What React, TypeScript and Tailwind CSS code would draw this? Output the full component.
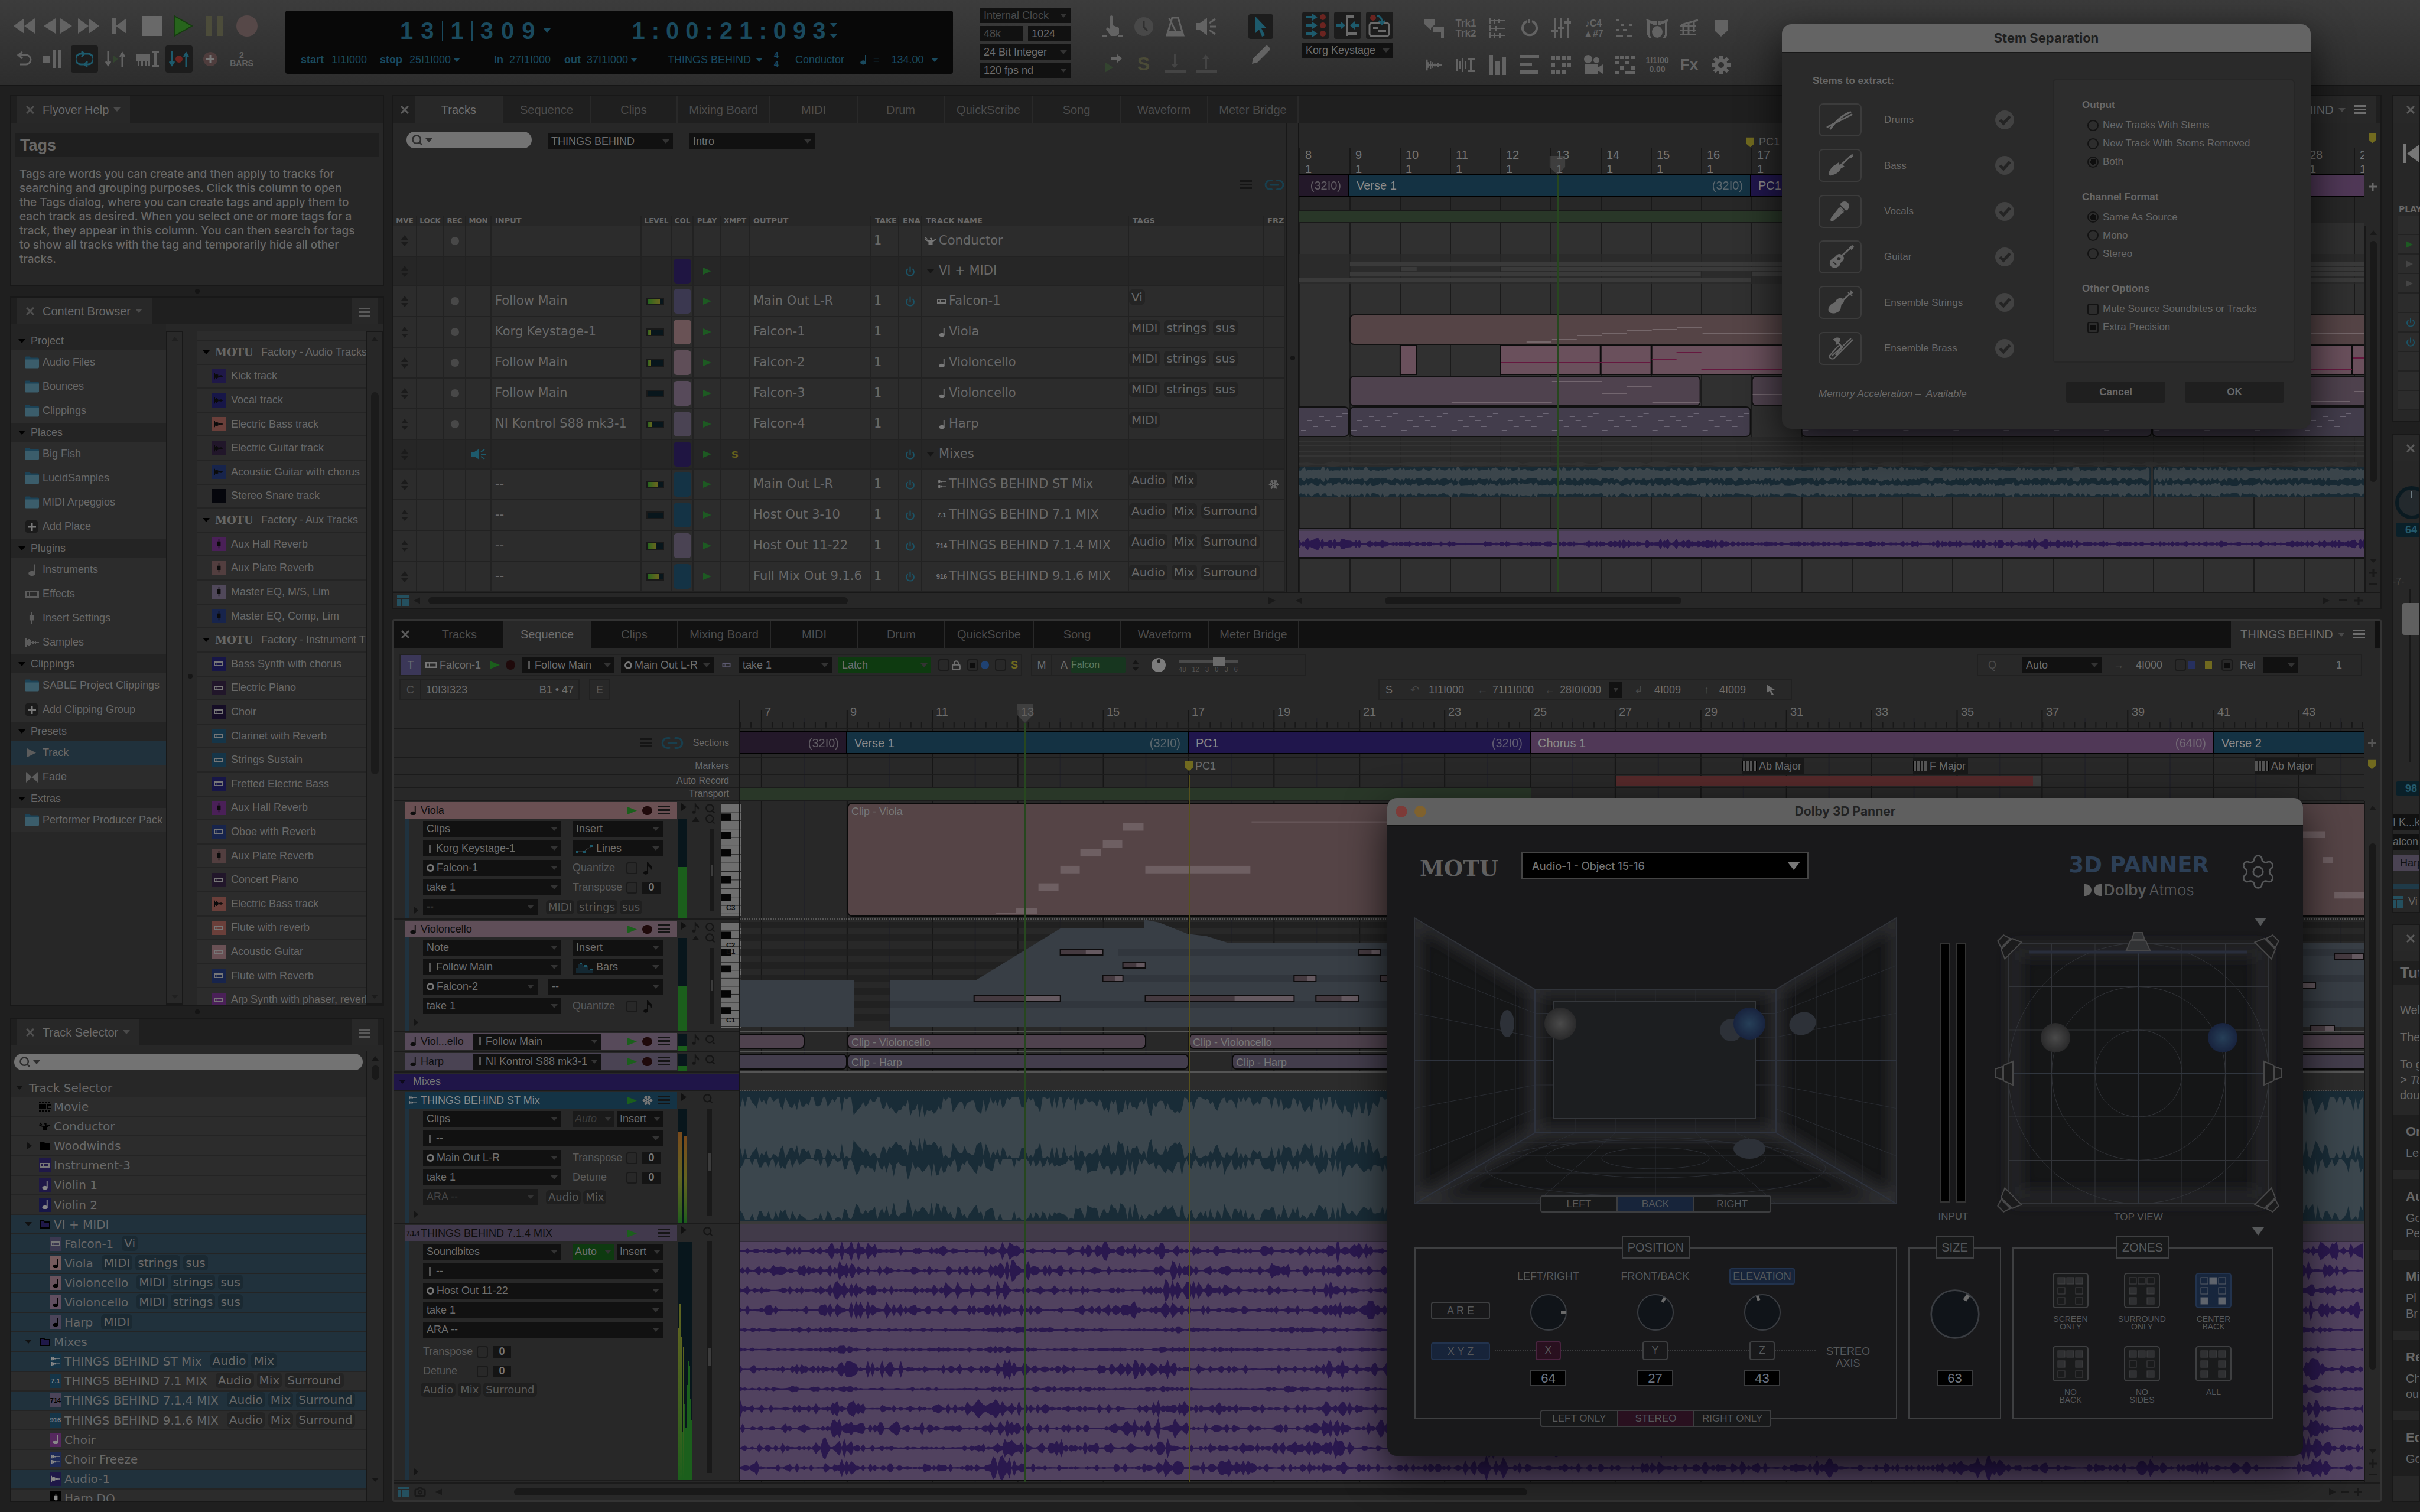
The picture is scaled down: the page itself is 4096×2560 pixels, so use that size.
import { ReactNode } from 'react';
import clsx, { ClassValue } from 'clsx';
import { twMerge } from 'tailwind-merge';
import { Link2, Lock, Power, Search, Snowflake, Camera, Settings } from 'lucide-react';

const VERDANA = "font-['DejaVu_Sans',Verdana,sans-serif]";

const cn = (...values: ClassValue[]) => twMerge(clsx(values));

/* ---------- small shapes ---------- */

function Down({ className }: { className?: string }) {
  return (
    <svg viewBox="0 0 12 7" preserveAspectRatio="none" className={cn('h-[7px] w-3 shrink-0 fill-current', className)}>
      <path d="M0 0h12L6 7z" />
    </svg>
  );
}

function Up({ className }: { className?: string }) {
  return (
    <svg viewBox="0 0 12 8" className={cn('h-2 w-3 shrink-0 fill-current', className)}>
      <path d="M0 8h12L6 0z" />
    </svg>
  );
}

function Play({ className }: { className?: string }) {
  return (
    <svg viewBox="0 0 12 12" preserveAspectRatio="none" className={cn('h-3 w-3 shrink-0 fill-current', className)}>
      <path d="M0 0v12l12-6z" />
    </svg>
  );
}

function Left({ className }: { className?: string }) {
  return (
    <svg viewBox="0 0 12 12" className={cn('h-3 w-[11px] shrink-0 fill-current', className)}>
      <path d="M12 0v12L0 6z" />
    </svg>
  );
}

function Bars({ className }: { className?: string }) {
  return (
    <svg viewBox="0 0 20 16" className={cn('h-4 w-5 shrink-0 fill-current', className)}>
      <path d="M0 0h20v3H0zM0 6h20v3H0zM0 12h20v3H0z" />
    </svg>
  );
}

function Cross({ className }: { className?: string }) {
  return (
    <svg viewBox="0 0 14 14" className={cn('h-[14px] w-[14px] shrink-0', className)}>
      <path d="M1 1l12 12M13 1L1 13" stroke="currentColor" strokeWidth="3" />
    </svg>
  );
}

function Plus({ className }: { className?: string }) {
  return (
    <svg viewBox="0 0 14 14" className={cn('h-[14px] w-[14px] shrink-0', className)}>
      <path d="M7 0v14M0 7h14" stroke="currentColor" strokeWidth="3" />
    </svg>
  );
}

function Note({ className }: { className?: string }) {
  return (
    <svg viewBox="0 0 10 16" className={cn('h-[15px] w-[10px] shrink-0 fill-current', className)}>
      <path d="M8 0h2v12a5 3.500 0 1 1-2-2z" />
    </svg>
  );
}

function Eighth({ className }: { className?: string }) {
  return (
    <svg viewBox="0 0 16 22" className={cn('h-[22px] w-4 shrink-0 fill-current', className)}>
      <path d="M6 0h2c0 5 7 5 7 11l-2 3c0-4-3-5-5-6v10a4 3 0 1 1-2-2z" />
    </svg>
  );
}

function WaveIcon({ className }: { className?: string }) {
  return (
    <svg viewBox="0 0 24 16" className={cn('h-3 w-4 shrink-0 fill-current', className)}>
      <path d="M0 0h3v16H0zM3 4h2v8H3zM6 2h2v12H6zM9 4h2v8H9zM12 6h3v4h-3zM3 7h21v2H3zM17 5h2v6h-2z" />
    </svg>
  );
}

function StereoIcon({ className }: { className?: string }) {
  return (
    <svg viewBox="0 0 16 18" className={cn('h-[16px] w-[14px] shrink-0 fill-current', className)}>
      <path d="M0 0h2v7H0zM3 1h2v5H3zM6 2h2v3H6zM2 3h14v1H2zM0 10h2v7H0zM3 11h2v5H3zM6 12h2v3H6zM2 13h14v1H2z" />
    </svg>
  );
}

function Rack({ className }: { className?: string }) {
  return (
    <svg viewBox="0 0 24 12" className={cn('h-[10px] w-5 shrink-0', className)}>
      <path fill="currentColor" fillRule="evenodd" d="M0 0h24v12H0zM3 3v6h4V3zM9 3v6h12V3z" />
    </svg>
  );
}

function Fader({ className }: { className?: string }) {
  return (
    <svg viewBox="0 0 10 22" className={cn('h-5 w-[9px] shrink-0 fill-current', className)}>
      <path d="M4 0h2v5h3v10H6v6H4v-6H1V5h3z" />
    </svg>
  );
}

function Folder({ className }: { className?: string }) {
  return (
    <svg viewBox="0 0 24 20" className={cn('h-[21px] w-6 shrink-0', className)}>
      <path d="M0 2q0-2 2-2h6l2 2h12q2 0 2 2v5H0z" fill="#1c4357" />
      <path d="M0 5h24v13q0 2-2 2H2q-2 0-2-2z" fill="#3b5d6b" />
    </svg>
  );
}

function Conductor({ className }: { className?: string }) {
  return (
    <svg viewBox="0 0 22 18" className={cn('h-4 w-5 shrink-0', className)}>
      <path
        d="M1 2l4 4M0 6l6 3M6 9h10l5-3M10 4h3v4M8 9h6v6H8z"
        stroke="currentColor"
        strokeWidth="2"
        fill="currentColor"
      />
    </svg>
  );
}

/* ---------- shared controls ---------- */

interface PickProps {
  label: string;
  value: string;
  prefix?: ReactNode;
  className?: string;
}

function Pick({ label, value, prefix, className }: PickProps) {
  return (
    <div className={cn('flex h-[27px] shrink-0 items-center gap-1 bg-[#111] px-[6px] text-[18px] text-[#6e6e6e]', className)}>
      {prefix}
      <select aria-label={label} className="h-full min-w-0 flex-1 appearance-none bg-transparent outline-none">
        <option>{value}</option>
      </select>
      <Down className="text-[#333]" />
    </div>
  );
}

const IN = <span className="mx-1 h-[14px] w-1 shrink-0 bg-[#555]" />;
const OUT = <span className="h-[13px] w-[13px] shrink-0 rounded-full border-[3px] border-[#777]" />;

function Tag({ text, dark }: { text: string; dark?: string }) {
  return <span className={cn('rounded-md bg-[#242424] px-1 leading-[26px]', dark)}>{text}</span>;
}

function PanelTab({ title, menu }: { title: string; menu?: boolean }) {
  return (
    <header className="flex h-[45px] shrink-0 justify-between bg-[#1f1f1f] px-[9px]">
      <div className="flex items-center bg-[#282828] px-[16px] text-[20px] text-[#6a6a6a]">
        <button aria-label={`Close ${title}`} className="mr-[14px] text-[#505050]">
          <Cross />
        </button>
        {title}
        <Down className="ml-2 text-[#4a4a4a]" />
      </div>
      {menu && (
        <button aria-label={`${title} menu`} className="flex w-[44px] items-center justify-center bg-[#282828] pt-1 text-[#5a5a5a]">
          <Bars />
        </button>
      )}
    </header>
  );
}

function SearchBox({ label, className }: { label: string; className?: string }) {
  return (
    <div className={cn('flex h-[28px] items-center gap-1 rounded-full bg-[#737373] px-[8px] text-[#2e2e2e]', className)}>
      <Search size={20} strokeWidth={3} />
      <Down />
      <input aria-label={label} className="min-w-0 flex-1 bg-transparent outline-none" />
    </div>
  );
}

/* ---------- wave drawing ---------- */

function randomizer(seed: number) {
  let s = seed;
  return () => {
    s = (s * 16807) % 2147483647;
    return s / 2147483647;
  };
}

function wavePath(width: number, mid: number, seed: number, step: number, amp: (x: number, r: number) => number) {
  const next = randomizer(seed * 7919 + 17);
  const top: string[] = [];
  const bottom: string[] = [];
  for (let x = 0; x <= width; x += step) {
    const a = amp(x, next());
    top.push(`${x} ${(mid - a).toFixed(1)}`);
    bottom.push(`${x} ${(mid + a).toFixed(1)}`);
  }
  return `M${top.join('L')}L${bottom.reverse().join('L')}Z`;
}

/* ---------- top bar ---------- */

function Cell({ label, children, className }: { label: string; children: ReactNode; className?: string }) {
  return (
    <button aria-label={label} className={cn('flex shrink-0 items-center justify-center text-[#636363]', className)}>
      {children}
    </button>
  );
}

function Art({ d, w = 30, h = 30, line }: { d: string; w?: number; h?: number; line?: boolean }) {
  return (
    <svg
      viewBox={`0 0 ${w} ${h}`}
      width={w}
      height={h}
      fill={line ? 'none' : 'currentColor'}
      stroke={line ? 'currentColor' : 'none'}
      strokeWidth={3}
    >
      <path d={d} />
    </svg>
  );
}

function Counter({ text, className }: { text: string; className?: string }) {
  return (
    <div className={cn('flex items-center gap-[13px] text-[40px] leading-[40px] font-bold', className)}>
      {text.split('').map((c, i) =>
        c === '|' ? <span key={i} className="h-[34px] w-[2px] bg-[#1a4a5e]" /> : <span key={i}>{c}</span>
      )}
    </div>
  );
}

function TopBar() {
  return (
    <header className="flex h-[144px] shrink-0 bg-linear-to-b from-[#3c3c3c] to-[#2d2d2d] pl-[22px]">
      <div className="w-[461px] shrink-0">
        <div className="flex h-[48px] items-center pt-[40px]">
          <Cell label="Rewind" className="w-[38px]"><Art w={36} h={26} d="M18 0v26L0 13zM36 0v26L18 13z" /></Cell>
          <Cell label="Step back" className="w-[34px] justify-end"><Art w={20} h={26} d="M20 0v26L0 13z" /></Cell>
          <Cell label="Step forward" className="w-[36px]"><Art w={20} h={26} d="M0 0v26l20-13z" /></Cell>
          <Cell label="Fast forward" className="w-[40px]"><Art w={36} h={26} d="M0 0v26l18-13zM18 0v26l18-13z" /></Cell>
          <Cell label="Return to start" className="w-[64px]"><Art w={24} h={26} d="M0 0h6v26H0zM24 0v26L6 13z" /></Cell>
          <Cell label="Stop" className="w-[46px]"><span className="h-[34px] w-[34px] bg-[#696969]" /></Cell>
          <Cell label="Play" className="w-[60px]">
            <svg width="34" height="38" viewBox="0 0 34 38"><path d="M2 2v34l30-17z" fill="#27641c" stroke="#163c10" strokeWidth="2" /></svg>
          </Cell>
          <Cell label="Pause" className="w-[46px] text-[#4c4c3a]"><Art w={28} h={34} d="M0 0h10v34H0zM18 0h10v34H18z" /></Cell>
          <Cell label="Record" className="w-[64px]"><span className="h-[36px] w-[36px] rounded-full bg-[#564848]" /></Cell>
        </div>
        <div className="flex h-[46px] items-center pt-[52px]">
          <Cell label="Undo" className="w-[36px]"><Art line w={28} h={26} d="M6 6h12a8 8 0 0 1 0 16H8M12 1L5 6l7 6" /></Cell>
          <Cell label="Memory" className="ml-[14px] w-[32px]"><Art w={30} h={30} d="M0 9h12v12H0zM17 0h4v30h-4zM25 0h5v30h-5z" /></Cell>
          <Cell label="Cycle" className="ml-[16px] h-[46px] w-[46px] rounded bg-[#1c1c1c] text-[#1d5a6c]">
            <Art line w={30} h={26} d="M14 22H9a9 9 0 0 1 0-18h4M10 0l5 4-5 5M16 4h5a9 9 0 0 1 0 18h-4M20 26l-5-4 5-5" />
          </Cell>
          <Cell label="Skip" className="ml-[12px] w-[34px]">
            <svg width="34" height="26" viewBox="0 0 34 26"><path d="M5 0v22M1 17l4 6 4-6M29 26V3M25 9l4-6 4 6" stroke="currentColor" strokeWidth="3" fill="none" /><path d="M13 6v14l9-7z" fill="#33442f" /></svg>
          </Cell>
          <Cell label="Link play" className="ml-[18px] w-[40px]"><Art w={40} h={26} d="M0 4h24v20h-3v-8h-3v8h-3v-8h-3v8H9v-8H6v8H3v-8H0zM27 0h12v3h-4v20h4v3H27v-3h4V3h-4z" /></Cell>
          <Cell label="Auto record" className="ml-[10px] h-[46px] w-[46px] rounded bg-[#1c1c1c] text-[#1d5a6c]">
            <svg width="34" height="26" viewBox="0 0 34 26"><path d="M5 0v22M1 17l4 6 4-6M29 26V3M25 9l4-6 4 6" stroke="currentColor" strokeWidth="3" fill="none" /><circle cx="17" cy="13" r="6" fill="#6b2420" /></svg>
          </Cell>
          <Cell label="Overdub" className="ml-[18px] h-[24px] w-[24px] rounded-full bg-[#4f3d3d] text-[#777]"><Plus /></Cell>
          <Cell label="Countoff" className="ml-[22px] w-[38px] flex-col text-[14px] leading-[14px] font-bold"><span>2</span><span>BARS</span></Cell>
        </div>
      </div>

      <div className="mt-[18px] flex h-[107px] w-[1130px] shrink-0 flex-col rounded bg-[#080808] text-[#1a4a5e]">
        <div className="flex h-[68px] items-center pl-[194px]">
          <Counter text="13|1|309" />
          <Down className="ml-[14px] h-2" />
          <div className="ml-[138px]"><Counter text="1:00:21:093" className="gap-[11px]" /></div>
          <div className="ml-2 flex flex-col gap-3"><Down /><Down /></div>
        </div>
        <div className="flex items-center pl-[26px] text-[18px] whitespace-nowrap">
          <span className="w-[52px] font-bold">start</span>
          <span className="w-[82px]">1I1I000</span>
          <span className="w-[50px] font-bold">stop</span>
          <span className="flex w-[143px] items-center gap-1">25I1I000 <Down /></span>
          <span className="w-[26px] font-bold">in</span>
          <span className="w-[93px]">27I1I000</span>
          <span className="w-[38px] font-bold">out</span>
          <span className="flex w-[137px] items-center gap-1">37I1I000 <Down /></span>
          <span className="flex w-[180px] items-center gap-2">THINGS BEHIND <Down /></span>
          <span className="flex w-[36px] flex-col text-[14px] leading-[15px] font-bold"><span>4</span><span>4</span></span>
          <span className="w-[110px]">Conductor</span>
          <Note className="mr-3 h-5" />
          <span className="flex items-center gap-3">= <span className="ml-2">134.00</span> <Down /></span>
        </div>
      </div>

      <div className="mt-[13px] ml-[46px] flex w-[153px] shrink-0 flex-col gap-[5px]">
        <Pick label="Clock source" value="Internal Clock" className="h-[26px] text-[#4a4a4a]" />
        <div className="flex gap-[9px] text-[18px] leading-[26px]">
          <span className="w-[72px] bg-[#111] pl-[6px] text-[#4a4a4a]">48k</span>
          <span className="w-[72px] bg-[#111] pl-[6px] text-[#6e6e6e]">1024</span>
        </div>
        <Pick label="Bit depth" value="24 Bit Integer" className="h-[26px]" />
        <Pick label="Frame rate" value="120 fps nd" className="h-[26px]" />
      </div>

      <div className="ml-[44px] grid shrink-0 auto-cols-[53px] grid-flow-col grid-rows-2 pt-[18px] [&>button]:h-[54px]">
        <Cell label="Tap tempo"><Art w={34} h={40} d="M12 4q3-6 6 0v14l10 4v10q-2 4-6 4h-8L6 24l3-3 3 3zM0 34h8v4H0zM26 34h8v4h-8z" /></Cell>
        <Cell label="Play through">
          <svg width="34" height="34"><path d="M14 5h10V0l9 8-9 8v-5H14z" fill="currentColor" /><path d="M4 14l14 9-14 9z" fill="#33442f" /></svg>
        </Cell>
        <Cell label="Clock" className="text-[#484848]"><svg width="34" height="34"><circle cx="17" cy="17" r="16" fill="currentColor" /><path d="M17 7v11l6 6" stroke="#303030" strokeWidth="3" fill="none" /></svg></Cell>
        <Cell label="Solo" className="text-[32px] font-bold text-[#4b4b37]">S</Cell>
        <Cell label="Metronome"><svg width="32" height="34"><path d="M11 2h10l9 30H2z" fill="none" stroke="currentColor" strokeWidth="3" /><path d="M4 24h24v8H3zM15 24L4 2h3l11 22z" fill="currentColor" /></svg></Cell>
        <Cell label="Import" className="text-[#444]"><Art w={36} h={32} d="M16 0h3v16h4l-6 7-6-7h5zM0 27h36v4H0z" /></Cell>
        <Cell label="Monitor"><svg width="36" height="32"><path d="M0 10h7L19 1v30L7 22H0z" fill="currentColor" /><path d="M23 10l10-7M24 16h11M23 22l10 7" stroke="currentColor" strokeWidth="3" /></svg></Cell>
        <Cell label="Export" className="text-[#444]"><Art w={36} h={32} d="M16 24h3V8h4l-6-8-6 8h5zM0 27h36v4H0z" /></Cell>
      </div>

      <div className="ml-[36px] flex w-[60px] shrink-0 flex-col items-center pt-[24px]">
        <Cell label="Pointer tool" className="h-[42px] w-[42px] rounded bg-[#1c1c1c] text-[#1d5a6c]"><Art w={24} h={34} d="M3 0l19 20h-9l6 12-5 2-5-12-6 6z" /></Cell>
        <Cell label="Pencil tool" className="mt-[10px]"><Art w={34} h={34} d="M2 32l2-9L25 2q2-2 4 0l3 3q2 2 0 4L11 30z" /></Cell>
      </div>

      <div className="ml-[40px] w-[154px] shrink-0 pt-[20px]">
        <div className="flex justify-between [&>button]:h-[46px] [&>button]:w-[46px] [&>button]:rounded [&>button]:bg-[#1c1c1c]">
          <Cell label="Record targets">
            <svg width="38" height="40">
              {[6, 20, 34].map((y) => (
                <g key={y}><path d={`M2 ${y - 2}h11v-4l9 6-9 6v-4H2z`} fill="#1d5a6c" /><circle cx="31" cy={y} r="5" fill="#6b2420" /></g>
              ))}
            </svg>
          </Cell>
          <Cell label="Split">
            <svg width="40" height="40"><path d="M18 2h3v36h-3zM21 3h10v5H21zM21 31h14v5H21z" fill="#6b6b6b" /><path d="M1 18h7v-5l8 7-8 7v-5H1zM39 18h-7v-5l-8 7 8 7v-5h7z" fill="#1d5a6c" /></svg>
          </Cell>
          <Cell label="Clip record">
            <svg width="40" height="40"><circle cx="9" cy="7" r="5" fill="#6b2420" /><rect x="3" y="16" width="33" height="22" rx="4" fill="none" stroke="#6b6b6b" strokeWidth="3" /><path d="M9 22h8v4H9zM17 27h14v4H17z" fill="#6b6b6b" /><path d="M16 4q8 0 8 12m-5-4l5 6 5-6" stroke="#1d5a6c" strokeWidth="3" fill="none" /></svg>
          </Cell>
        </div>
        <Pick label="Controller" value="Korg Keystage" className="mt-[6px] h-[26px]" />
      </div>

      <div className="ml-[42px] grid shrink-0 auto-cols-[54px] grid-flow-col grid-rows-2 pt-[21px] [&>button]:h-[54px]">
        <Cell label="Shields"><Art w={34} h={32} d="M0 0h18v10l-6 5v4L0 8zM16 14h18v18h-5V22H16z" /></Cell>
        <Cell label="Soundbites"><WaveIcon className="h-5 w-7" /></Cell>
        <Cell label="Track names" className="flex-col text-[17px] leading-[17px] font-bold"><span>Trk1</span><span>Trk2</span></Cell>
        <Cell label="Waveform editor"><Art w={34} h={28} d="M0 4h3v20H0zM5 8h3v12H5zM10 2h3v24h-3zM15 8h3v12h-3zM20 2h12v3h-4v18h4v3H20v-3h4V5h-4z" /></Cell>
        <Cell label="Waves"><Art w={30} h={36} d="M0 1h3v10H0zM3 4h24v2H3zM8 2h3v8H8zM15 2h3v7h-3zM0 13h3v10H0zM3 17h24v2H3zM10 14h3v8h-3zM0 25h3v10H0zM3 29h24v2H3zM8 26h3v8H8zM17 26h3v8h-3z" /></Cell>
        <Cell label="Levels"><Art w={30} h={34} d="M0 0h7v34H0zM11 10h7v24h-7zM22 4h7v30h-7z" /></Cell>
        <Cell label="Loop"><svg width="32" height="32"><path d="M12 4a12 12 0 1 0 8 0M15 1v6" fill="none" stroke="currentColor" strokeWidth="4" /></svg></Cell>
        <Cell label="Layers"><Art w={32} h={34} d="M0 0h32v6H0zM0 13h20v6H0zM0 26h30v6H0z" /></Cell>
        <Cell label="Mixer"><Art w={34} h={34} d="M4 0h3v34H4zM15 0h3v34h-3zM26 0h3v34h-3zM0 20h11v4H0zM11 14h11v4H11zM22 5h11v4H22z" /></Cell>
        <Cell label="Steps"><Art w={36} h={32} d="M0 0h7v7H0zM9 0h7v7H9zM18 0h7v7h-7zM27 0h7v7h-7zM0 12h7v7H0zM18 12h7v7h-7zM27 12h7v7h-7zM0 24h7v7H0zM9 24h7v7H9zM18 24h7v7h-7z" /></Cell>
        <Cell label="Chords" className="flex-col text-[16px] leading-[17px] font-bold"><span>♪C4</span><span>▲#7</span></Cell>
        <Cell label="Movie"><Art w={36} h={34} d="M2 7a7 7 0 1 1 14 0a7 7 0 1 1-14 0M18 9a5 5 0 1 1 10 0a5 5 0 1 1-10 0M4 16h22v5l8-5v16l-8-5v5H4z" /></Cell>
        <Cell label="Notes"><Art w={32} h={32} d="M0 0h6v4H0zM8 8h6v4H8zM22 8h6v4h-6zM0 17h6v4H0zM12 17h6v4h-6zM0 27h12v4H0zM18 27h10v4H18z" /></Cell>
        <Cell label="Grid"><Art w={36} h={32} d="M0 0h7v6H0zM9 0h7v6H9zM18 0h7v6h-7zM27 0h7v6h-7zM0 9h7v6H0zM18 9h7v6h-7zM9 18h7v6H9zM27 18h7v6h-7zM0 27h7v5H0zM18 27h16v5H18z" /></Cell>
        <Cell label="Drum kit"><Art w={38} h={36} d="M0 2l14 5-2 4L6 9v20l4 6H6l-4-6V8zM38 2L24 7l2 4 6-2v20l-4 6h4l4-6V8zM10 24a9 10 0 1 1 18 0a9 10 0 1 1-18 0M12 6h6v7h-6zM20 6h6v7h-6z" /></Cell>
        <Cell label="Time" className="flex-col text-[14px] leading-[15px] font-bold"><span>1I1I00</span><span>0.00</span></Cell>
        <Cell label="Notation"><svg width="36" height="32"><path d="M2 12h28M2 19h28M2 26h28" stroke="currentColor" strokeWidth="2" /><path d="M8 8v18M17 6v19M26 5v18M33 2L5 10" stroke="currentColor" strokeWidth="3" fill="none" /></svg></Cell>
        <Cell label="Effects" className="text-[26px] font-bold">Fx</Cell>
        <Cell label="Marker"><Art w={22} h={28} d="M0 0h22v18L11 28 0 18z" /></Cell>
        <Cell label="Settings">
          <svg width="34" height="34" viewBox="-17 -17 34 34">
            {[0, 45, 90, 135].map((a) => <rect key={a} x="-3" y="-16" width="6" height="32" fill="currentColor" transform={`rotate(${a})`} />)}
            <circle r="11" fill="currentColor" />
            <circle r="5" fill="#303030" />
          </svg>
        </Cell>
      </div>
    </header>
  );
}

/* ---------- left column ---------- */

const browser = [
  { title: 'Project', items: ['Audio Files', 'Bounces', 'Clippings'] },
  { title: 'Places', items: ['Big Fish', 'LucidSamples', 'MIDI Arpeggios', 'Add Place'] },
  { title: 'Plugins', items: ['Instruments', 'Effects', 'Insert Settings', 'Samples'] },
  { title: 'Clippings', items: ['SABLE Project Clippings', 'Add Clipping Group'] },
  { title: 'Presets', items: ['Track', 'Fade'] },
  { title: 'Extras', items: ['Performer Producer Pack'] },
];

function BrowserIcon({ name }: { name: string }) {
  if (name.startsWith('Add')) {
    return <span className="flex h-[21px] w-[21px] items-center justify-center rounded bg-[#1b1b1b] text-[#7a7a7a]"><Plus /></span>;
  }
  if (name === 'Instruments') return <Note className="h-5 w-3" />;
  if (name === 'Effects') return <Rack className="h-3 w-6" />;
  if (name === 'Insert Settings') return <Fader />;
  if (name === 'Samples') return <WaveIcon className="h-4 w-6" />;
  if (name === 'Track') return <Play className="h-[15px] w-[15px]" />;
  if (name === 'Fade') return <Art w={20} h={18} d="M0 0l10 9L0 18zM20 0L10 9l10 9z" />;
  return <Folder />;
}

const presets: [string, string, string][] = [
  ['head', 'Factory - Audio Tracks', ''],
  ['wave', 'Kick track', 'bg-[#1f1848]'],
  ['wave', 'Vocal track', 'bg-[#171648]'],
  ['wave', 'Electric Bass track', 'bg-[#6a3f3a]'],
  ['wave', 'Electric Guitar track', 'bg-[#21162a]'],
  ['wave', 'Acoustic Guitar with chorus', 'bg-[#17244c]'],
  ['none', 'Stereo Snare track', 'bg-[#05060c]'],
  ['head', 'Factory - Aux Tracks', ''],
  ['aux', 'Aux Hall Reverb', 'bg-[#4a2058]'],
  ['aux', 'Aux Plate Reverb', 'bg-[#523e3f]'],
  ['master', 'Master EQ, M/S, Lim', 'bg-[#50485a]'],
  ['master', 'Master EQ, Comp, Lim', 'bg-[#17244c]'],
  ['head', 'Factory - Instrument Tracks', ''],
  ['inst', 'Bass Synth with chorus', 'bg-[#171648]'],
  ['inst', 'Electric Piano', 'bg-[#21162a]'],
  ['inst', 'Choir', 'bg-[#150d26]'],
  ['inst', 'Clarinet with Reverb', 'bg-[#153548]'],
  ['inst', 'Strings Sustain', 'bg-[#153548]'],
  ['inst', 'Fretted Electric Bass', 'bg-[#171648]'],
  ['aux', 'Aux Hall Reverb', 'bg-[#4a2058]'],
  ['inst', 'Oboe with Reverb', 'bg-[#17244c]'],
  ['aux', 'Aux Plate Reverb', 'bg-[#523e3f]'],
  ['inst', 'Concert Piano', 'bg-[#21162a]'],
  ['wave', 'Electric Bass track', 'bg-[#6a3f3a]'],
  ['inst', 'Flute with reverb', 'bg-[#6a3f3a]'],
  ['inst', 'Acoustic Guitar', 'bg-[#695054]'],
  ['inst', 'Flute with Reverb', 'bg-[#17244c]'],
  ['inst', 'Arp Synth with phaser, reverb', 'bg-[#4a2058]'],
];

function PresetIcon({ kind }: { kind: string }) {
  if (kind === 'wave') return <WaveIcon className="text-[#0b0b0b]" />;
  if (kind === 'aux' || kind === 'master') return <Fader className="h-4 text-[#0b0b0b]" />;
  if (kind === 'inst') return <Rack className="h-2 w-4 text-[#777]" />;
  return null;
}

interface TreeRow {
  name: string;
  icon: string;
  tile?: string;
  depth: number;
  on?: boolean;
  tags?: string[];
}

const tree: TreeRow[] = [
  { name: 'Movie', icon: 'movie', depth: 0 },
  { name: 'Conductor', icon: 'conductor', depth: 0 },
  { name: 'Woodwinds', icon: 'closed', depth: 0 },
  { name: 'Instrument-3', icon: 'rack', tile: 'bg-[#1f1848]', depth: 0 },
  { name: 'Violin 1', icon: 'note', tile: 'bg-[#1f1848] text-[#888]', depth: 0 },
  { name: 'Violin 2', icon: 'note', tile: 'bg-[#171648] text-[#888]', depth: 0 },
  { name: 'VI + MIDI', icon: 'open', depth: 0, on: true },
  { name: 'Falcon-1', icon: 'rack', tile: 'bg-[#3b3850]', depth: 1, on: true, tags: ['Vi'] },
  { name: 'Viola', icon: 'note', tile: 'bg-[#755a5c]', depth: 1, on: true, tags: ['MIDI', 'strings', 'sus'] },
  { name: 'Violoncello', icon: 'note', tile: 'bg-[#68525c]', depth: 1, on: true, tags: ['MIDI', 'strings', 'sus'] },
  { name: 'Violoncello', icon: 'note', tile: 'bg-[#604e60]', depth: 1, on: true, tags: ['MIDI', 'strings', 'sus'] },
  { name: 'Harp', icon: 'note', tile: 'bg-[#4b4459]', depth: 1, on: true, tags: ['MIDI'] },
  { name: 'Mixes', icon: 'open', depth: 0, on: true },
  { name: 'THINGS BEHIND ST Mix', icon: 'stereo', tile: 'bg-[#153548] text-[#888]', depth: 1, on: true, tags: ['Audio', 'Mix'] },
  { name: 'THINGS BEHIND 7.1 MIX', icon: '7.1', tile: 'bg-[#153548] text-[#888]', depth: 1, tags: ['Audio', 'Mix', 'Surround'] },
  { name: 'THINGS BEHIND 7.1.4 MIX', icon: '714', tile: 'bg-[#4b4459]', depth: 1, on: true, tags: ['Audio', 'Mix', 'Surround'] },
  { name: 'THINGS BEHIND 9.1.6 MIX', icon: '916', tile: 'bg-[#153548] text-[#888]', depth: 1, tags: ['Audio', 'Mix', 'Surround'] },
  { name: 'Choir', icon: 'note', tile: 'bg-[#55285e] text-[#888]', depth: 1 },
  { name: 'Choir Freeze', icon: 'stereo', tile: 'bg-[#1e2a55] text-[#888]', depth: 1 },
  { name: 'Audio-1', icon: 'wave', tile: 'bg-[#1f1848] text-[#888]', depth: 1, on: true },
  { name: 'Harp DQ', icon: 'fader', tile: 'bg-black text-[#888]', depth: 1 },
];

function TreeIcon({ icon }: { icon: string }) {
  if (icon === 'movie') return <Art w={20} h={16} d="M0 0h3v2H0zM5 0h3v2H5zM10 0h3v2h-3zM15 0h3v2h-3zM0 4h12v8H0zM14 4h6v2h-4v4h4v2h-6zM0 14h3v2H0zM5 14h3v2H5zM10 14h3v2h-3zM15 14h3v2h-3z" />;
  if (icon === 'conductor') return <Conductor />;
  if (icon === 'closed') return <Art w={18} h={14} d="M1 0h6l2 2h9v12H0V1z" />;
  if (icon === 'open') return <svg width="18" height="14"><path d="M1 1h6l2 2h8v10H1z" fill="#1f1848" stroke="#000" strokeWidth="2" /></svg>;
  if (icon === 'rack') return <Rack className="h-2 w-4 text-[#777]" />;
  if (icon === 'note') return <Note />;
  if (icon === 'stereo') return <StereoIcon />;
  if (icon === 'wave') return <WaveIcon />;
  if (icon === 'fader') return <Fader className="h-4" />;
  return <span className="font-['Liberation_Sans'] text-[11px] font-bold">{icon}</span>;
}

function LeftColumn() {
  return (
    <aside className="flex w-[633px] shrink-0 flex-col text-[#686868]">
      <section className="h-[323px] border-2 border-[#181818] bg-[#272727]">
        <PanelTab title="Flyover Help" />
        <h2 className="mx-[7px] mt-[18px] bg-[#1f1f1f] px-2 text-[27px] leading-[40px] font-bold">Tags</h2>
        <p className="mt-[17px] px-[14px] font-[Inter,sans-serif] text-[19px] leading-6 font-medium">
          Tags are words you can create and then apply to tracks for<br />
          searching and grouping purposes. Click this column to open<br />
          the Tags dialog, where you can create tags and apply them to<br />
          each track as desired. When you select one or more tags for a<br />
          track, they appear in this column. You can then search for tags<br />
          to show all tracks with the tag and temporarily hide all other<br />
          tracks.
        </p>
      </section>
      <div className="mx-auto my-[5px] h-2 w-2 rounded-full bg-[#141414]" />

      <section className="flex h-[1201px] flex-col overflow-hidden border-2 border-[#181818] bg-[#272727] text-[18px]">
        <PanelTab title="Content Browser" menu />
        <div className="flex min-h-0 flex-1">
          <nav className="w-[262px] shrink-0 overflow-hidden whitespace-nowrap">
            {browser.map((g, i) => (
              <div key={g.title}>
                <h3 className={cn('flex items-center bg-[#242424] pl-3', i === 0 ? 'h-[44px] pt-3' : 'h-[32px]')}>
                  <Down className="mr-[9px] text-black" />
                  {g.title}
                </h3>
                {g.items.map((name) => (
                  <a
                    key={name}
                    href="#browse"
                    className={cn('flex h-[41px] items-center pl-[22px]', name === 'Track' ? 'bg-[#20313c]' : 'bg-[#2c2c2c]')}
                  >
                    <span className="mr-[6px] flex w-[25px] shrink-0 justify-center text-[#5c5c5c]"><BrowserIcon name={name} /></span>
                    {name}
                  </a>
                ))}
              </div>
            ))}
          </nav>
          <div className="mt-[11px] flex w-[29px] shrink-0 flex-col items-center justify-between border-2 border-[#181818] bg-[#292929] py-2 text-[#202020]">
            <Up />
            <Down />
          </div>
          <div className="flex w-[24px] shrink-0 items-center justify-center pt-[40px]"><span className="h-2 w-2 rounded-full bg-[#161616]" /></div>
          <div className="mt-[11px] w-[286px] shrink-0 overflow-hidden">
            <div className="h-[15px] bg-[#2c2c2c]" />
            <ul className="flex h-[1137px] flex-col whitespace-nowrap">
              {presets.map(([kind, name, tile], i) => (
                <li key={i} className="flex flex-1 items-center border-t-2 border-[#242424] bg-[#2c2c2c]">
                  {kind === 'head' ? (
                    <>
                      <Down className="ml-[9px] text-black" />
                      <b className="ml-[9px] w-[78px] shrink-0 font-['DejaVu_Serif'] text-[18px]">MOTU</b>
                    </>
                  ) : (
                    <span className={cn('mr-[9px] ml-6 flex h-6 w-6 shrink-0 items-center justify-center', tile)}><PresetIcon kind={kind} /></span>
                  )}
                  {name}
                </li>
              ))}
            </ul>
          </div>
          <div className="mt-[11px] flex flex-1 flex-col items-center border-2 border-[#181818] py-2 text-[#1b1b1b]">
            <Up />
            <div className="mt-[86px] h-[647px] w-[13px] rounded-full bg-[#1b1b1b]" />
            <Down className="mt-auto" />
          </div>
        </div>
      </section>
      <div className="mx-auto my-[6px] h-2 w-2 rounded-full bg-[#141414]" />

      <section className={cn('flex min-h-0 flex-1 flex-col border-2 border-[#181818] bg-[#272727] text-[20px]', VERDANA)}>
        <div className="font-['Liberation_Sans']"><PanelTab title="Track Selector" menu /></div>
        <div className="flex min-h-0 flex-1">
          <div className="min-w-0 flex-1 overflow-hidden whitespace-nowrap">
            <SearchBox label="Search tracks" className="mt-[14px] mr-[6px] ml-[5px]" />
            <div className="mt-[13px] flex h-[33px] items-center pl-2"><Down className="mr-[10px] text-[#111]" />Track Selector</div>
            <ul className="flex h-[697px] flex-col">
              {tree.map((t, i) => (
                <li
                  key={i}
                  className={cn('flex flex-1 items-center border-b-2 border-[#242424]', t.on ? 'bg-[#20313c]' : 'bg-[#2c2c2c]')}
                >
                  <span className="flex w-[47px] shrink-0 justify-end pr-3 text-[#111]">
                    {t.icon === 'open' && <Down />}
                    {t.icon === 'closed' && <Play className="w-2" />}
                  </span>
                  {t.depth === 1 && <span className="w-[18px] shrink-0" />}
                  <span className={cn('mr-[5px] flex h-6 w-5 shrink-0 items-center justify-center text-black', t.tile)}><TreeIcon icon={t.icon} /></span>
                  {t.name}
                  <span className="ml-[14px] flex gap-[5px] pb-[2px]">
                    {t.tags?.map((tag) => <Tag key={tag} text={tag} dark={t.on ? 'bg-[#1a2932]' : undefined} />)}
                  </span>
                </li>
              ))}
            </ul>
          </div>
          <div className="mt-[10px] flex w-[28px] shrink-0 flex-col items-center border-l-2 border-[#181818] py-2 text-[#151515]">
            <Up />
            <div className="mt-2 h-6 w-[13px] rounded-full bg-[#191919]" />
            <Down className="mt-auto mb-[24px]" />
          </div>
        </div>
      </section>
    </aside>
  );
}

/* ---------- window tabs ---------- */

const tabs: [string, string][] = [
  ['Tracks', 'w-[149px]'],
  ['Sequence', 'w-[148px]'],
  ['Clips', 'w-[147px]'],
  ['Mixing Board', 'w-[157px]'],
  ['MIDI', 'w-[148px]'],
  ['Drum', 'w-[147px]'],
  ['QuickScribe', 'w-[150px]'],
  ['Song', 'w-[148px]'],
  ['Waveform', 'w-[148px]'],
  ['Meter Bridge', 'w-[153px]'],
];

function WindowTabs({ active, bar }: { active: string; bar: string }) {
  return (
    <div className={cn('flex h-[46px] shrink-0 items-stretch text-[20px] text-[#4c4c4c]', bar)}>
      <button aria-label="Close" className="flex w-[37px] items-center justify-center text-[#5c5c5c]"><Cross /></button>
      {tabs.map(([name, width]) => (
        <button
          key={name}
          className={cn(width, 'border-r-2 border-[#292929]', name === active && 'bg-[#282828] text-[#6e6e6e]')}
        >
          {name}
        </button>
      ))}
      <div className="mr-2 ml-auto flex w-[244px] items-center gap-2 bg-[#282828] pl-[16px] text-[#6e6e6e]">
        THINGS BEHIND
        <Down className="text-[#4a4a4a]" />
        <Bars className="ml-[6px]" />
      </div>
    </div>
  );
}

function VerticalBar({ thumb }: { thumb: string }) {
  return (
    <div className="flex w-[27px] flex-1 flex-col items-center gap-[10px] border-l-2 border-[#181818] pt-2 pb-3 text-[#191919]">
      <Up />
      <div className={cn('w-[12px] rounded-full bg-[#191919]', thumb)} />
      <Down className="mt-auto" />
      <Plus />
      <span className="h-[3px] w-[14px] bg-[#191919]" />
    </div>
  );
}

/* ---------- upper window: tracks ---------- */

const columns: [string, string][] = [
  ['MVE', 'w-[39px]'], ['LOCK', 'w-[46px]'], ['REC', 'w-[37px]'], ['MON', 'w-[43px]'], ['INPUT', 'w-[254px]'],
  ['LEVEL', 'w-[52px]'], ['COL', 'w-[36px]'], ['PLAY', 'w-[47px]'], ['XMPT', 'w-[48px]'], ['OUTPUT', 'w-[206px]'],
  ['TAKE', 'w-[47px]'], ['ENA', 'w-[39px]'], ['TRACK NAME', 'w-[350px]'], ['TAGS', 'w-[228px]'], ['FRZ', 'w-[36px]'],
];

interface Track {
  name: string;
  kind: string;
  input?: string;
  output?: string;
  color?: string;
  level?: string;
  rec?: boolean;
  ena?: boolean;
  tags?: string[];
}

const tracks: Track[] = [
  { name: 'Conductor', kind: 'conductor', rec: true },
  { name: 'VI + MIDI', kind: 'folder', color: 'bg-[#1f1542]', ena: true },
  { name: 'Falcon-1', kind: 'rack', input: 'Follow Main', output: 'Main Out L-R', color: 'bg-[#3b3850]', level: 'w-[21px]', rec: true, ena: true, tags: ['Vi'] },
  { name: 'Viola', kind: 'note', input: 'Korg Keystage-1', output: 'Falcon-1', color: 'bg-[#695255]', level: 'w-[6px]', rec: true, tags: ['MIDI', 'strings', 'sus'] },
  { name: 'Violoncello', kind: 'note', input: 'Follow Main', output: 'Falcon-2', color: 'bg-[#5f4e58]', level: 'w-[6px]', rec: true, tags: ['MIDI', 'strings', 'sus'] },
  { name: 'Violoncello', kind: 'note', input: 'Follow Main', output: 'Falcon-3', color: 'bg-[#574a5a]', level: 'w-0', rec: true, tags: ['MIDI', 'strings', 'sus'] },
  { name: 'Harp', kind: 'note', input: 'NI Kontrol S88 mk3-1', output: 'Falcon-4', color: 'bg-[#4a4353]', level: 'w-[8px]', rec: true, tags: ['MIDI'] },
  { name: 'Mixes', kind: 'folder', color: 'bg-[#1f1542]', ena: true },
  { name: 'THINGS BEHIND ST Mix', kind: 'stereo', input: '--', output: 'Main Out L-R', color: 'bg-[#143345]', level: 'w-[17px]', ena: true, tags: ['Audio', 'Mix'] },
  { name: 'THINGS BEHIND 7.1 MIX', kind: '7.1', input: '--', output: 'Host Out 3-10', color: 'bg-[#143345]', level: 'w-0', ena: true, tags: ['Audio', 'Mix', 'Surround'] },
  { name: 'THINGS BEHIND 7.1.4 MIX', kind: '714', input: '--', output: 'Host Out 11-22', color: 'bg-[#4a4353]', level: 'w-[15px]', ena: true, tags: ['Audio', 'Mix', 'Surround'] },
  { name: 'THINGS BEHIND 9.1.6 MIX', kind: '916', input: '--', output: 'Full Mix Out 9.1.6', color: 'bg-[#143345]', level: 'w-[19px]', ena: true, tags: ['Audio', 'Mix', 'Surround'] },
];

function TrackTable() {
  return (
    <table className={cn('w-[1508px] table-fixed border-collapse text-left text-[21px] whitespace-nowrap', VERDANA)}>
      <thead>
        <tr className="h-[17px] text-[12px] leading-[16px] font-bold">
          {columns.map(([name, width], i) => (
            <th key={name} className={cn(width, 'border-r-2 border-[#222] p-0', i === 4 || i > 8 ? 'pl-[6px] text-[13px]' : 'text-center')}>
              {name}
            </th>
          ))}
        </tr>
      </thead>
      <tbody>
        {tracks.map((t, i) => {
          const folder = t.kind === 'folder';
          return (
            <tr
              key={i}
              className={cn(
                '[&>td]:border-r-2 [&>td]:border-b-2 [&>td]:border-[#222] [&>td]:p-0',
                folder ? 'h-[50px] bg-[#262626]' : 'h-[52px] bg-[#2c2c2c]'
              )}
            >
              <td><span className="flex flex-col items-center gap-1 text-[#1b1b1b]"><Up /><Down /></span></td>
              <td />
              <td>{t.rec && <span className="mx-auto block h-[14px] w-[14px] rounded-full bg-[#484848]" />}</td>
              <td>
                {t.name === 'Mixes' && (
                  <svg width="24" height="18" className="mx-auto text-[#1d5a6c]"><path d="M0 5h5l8-5v18l-8-5H0z" fill="currentColor" /><path d="M16 5l6-4M16 9h8M16 13l6 4" stroke="currentColor" strokeWidth="2" /></svg>
                )}
              </td>
              <td><span className="pl-[6px]">{t.input}</span></td>
              <td>
                {t.level && (
                  <span className="ml-[8px] block h-[13px] w-[30px] border-2 border-[#191919] bg-[#08161c]">
                    <span className={cn('block h-full bg-linear-to-r from-[#1d661e] to-[#6a661e]', t.level)} />
                  </span>
                )}
              </td>
              <td>{t.color && <span className={cn('mx-auto block h-[42px] w-[30px] rounded-md', t.color)} />}</td>
              <td>{t.color && <Play className="mx-auto w-[14px] text-[#1d5a22]" />}</td>
              <td className="text-center">{t.name === 'Mixes' && <b className="text-[20px] text-[#66611c]">s</b>}</td>
              <td><span className="pl-[6px]">{t.output}</span></td>
              <td><span className="pl-[4px]">{!folder && '1'}</span></td>
              <td>{t.ena && <Power size={17} strokeWidth={3} className="mx-auto text-[#1b5467]" />}</td>
              <td>
                <span className="flex items-center">
                  {folder || t.kind === 'conductor' ? (
                    <span className="flex w-[28px] justify-center text-[#777]">{folder ? <Down className="text-[#151515]" /> : <Conductor />}</span>
                  ) : (
                    <span className="ml-[21px] flex w-[24px] justify-center text-[#7a7a7a]"><TreeIcon icon={t.kind} /></span>
                  )}
                  {t.name}
                </span>
              </td>
              <td><span className="flex gap-[7px] pb-[14px] text-[20px]">{t.tags?.map((tag) => <Tag key={tag} text={tag} />)}</span></td>
              <td>{t.kind === 'stereo' && <Snowflake size={18} strokeWidth={3} className="mx-auto text-[#666]" />}</td>
            </tr>
          );
        })}
      </tbody>
    </table>
  );
}

interface SectionItem {
  name: string;
  width: number;
  length?: string;
  color: string;
}

function SectionBar({ items, height }: { items: SectionItem[]; height: string }) {
  return (
    <div className={cn('flex border-y-2 border-black bg-black text-[20px] text-[#8a8a8a]', height)}>
      {items.map((s, i) => (
        <div
          key={i}
          className={cn('flex shrink-0 items-center justify-between border-r-2 border-black px-[12px]', s.color)}
          style={{ width: s.width }}
        >
          <span>{s.name}</span>
          <span className="opacity-60">{s.length}</span>
        </div>
      ))}
    </div>
  );
}

function Playhead() {
  return (
    <svg viewBox="0 0 28 34" className="h-[32px] w-[28px] shrink-0">
      <path d="M0 0h28v20L14 34 0 20z" fill="#555" fillOpacity="0.5" />
    </svg>
  );
}

function Flag() {
  return (
    <svg viewBox="0 0 14 18" className="h-[18px] w-[13px] shrink-0">
      <path d="M0 0h14v12l-7 6-7-6z" fill="#716a1f" />
    </svg>
  );
}

const upperViolaNotes = [[385, 42, 46], [428, 42, 42], [471, 42, 35], [513, 42, 31], [555, 42, 27], [598, 42, 25], [640, 42, 22], [683, 1121, 31]];
const harpNotes = [40, 23, 33, 16, 23, 33, 16, 11];

function UpperLane({ index }: { index: number }) {
  const h = index === 1 || index === 7 ? 50 : 52;
  return (
    <svg viewBox={`0 0 1804 ${h}`} preserveAspectRatio="none" className={cn('block w-full', h === 50 ? 'h-[50px]' : 'h-[52px]')}>
      {index === 1 && (
        <g>
          <rect width="1804" height="50" fill="#2a2a2a" fillOpacity="0.7" />
          <path d="M86 13h1718v7H86zM172 22h27v7h-27zM342 22h1462v7H342zM86 31h594v7H86zM767 31h1037v7H767zM0 40h765v8H0zM850 40h954v8H850z" fill="#3a3a3a" />
        </g>
      )}
      {index === 3 && (
        <g>
          <rect x="86" y="1" width="1740" height="50" rx="7" fill="#554446" stroke="#111" strokeWidth="2" />
          {upperViolaNotes.map(([x, w, y]) => <rect key={x} x={x} y={y} width={w} height="2" fill="#75676a" />)}
        </g>
      )}
      {index === 4 && (
        <g fill="#6a505c" stroke="#0d0d0d" strokeWidth="2">
          <rect x="171" y="1" width="28" height="49" />
          <rect x="341" y="1" width="169" height="49" />
          <rect x="511" y="1" width="85" height="49" />
          <rect x="597" y="1" width="1186" height="49" />
          <rect x="1784" y="1" width="30" height="49" />
          <path d="M342 30h254M597 24h42M639 13h42M681 41h1102M1784 22h20" stroke="#66183f" fill="none" />
        </g>
      )}
      {index === 5 && (
        <g>
          <rect x="86" y="1" width="593" height="50" rx="7" fill="#4f424e" stroke="#111" strokeWidth="2" />
          <rect x="767" y="1" width="1060" height="50" rx="7" fill="#4f424e" stroke="#111" strokeWidth="2" />
          <path d="M258 45h170M428 10h85M513 30h42M555 19h42M598 45h80M768 32h50M1600 44h180M1787 27h20" stroke="#73666f" strokeWidth="2" />
        </g>
      )}
      {index === 6 && (
        <g>
          {[[-20, 104], [86, 678], [851, 592], [1445, 380]].map(([x, w]) => (
            <rect key={x} x={x} y="1" width={w} height="50" rx="7" fill="#433d4c" stroke="#111" strokeWidth="2" />
          ))}
          {Array.from({ length: 21 }, (_, b) => b).filter((b) => b !== 9).map((b) =>
            harpNotes.map((y, i) => (
              <rect key={`${b}-${i}`} x={b * 85 + 3 + i * 10} y={y} width="9" height="2" fill="#6d6776" />
            ))
          )}
        </g>
      )}
      {index === 7 && (
        <g>
          <rect width="1804" height="50" fill="#2b2b2b" fillOpacity="0.8" />
          <path d="M0 6h1804v2H0zM0 13h1804v2H0zM0 24h1804v2H0zM0 31h1804v2H0z" fill="#343434" />
          <path d={wavePath(1804, 46, 5, 14, (_x, r) => 1 + r * 4)} fill="#313131" />
        </g>
      )}
      {index === 8 && (
        <g>
          <rect width="1442" height="52" fill="#182a34" rx="4" />
          <rect x="1446" width="370" height="52" rx="4" fill="#182a34" />
          <path d={wavePath(1441, 13, 3, 3, (_x, r) => 6 + r * r * 7)} fill="#3b454b" />
          <path d={wavePath(1441, 39, 9, 3, (_x, r) => 6 + r * r * 7)} fill="#3b454b" />
          <g transform="translate(1447)">
            <path d={wavePath(357, 13, 4, 3, (_x, r) => 6 + r * r * 7)} fill="#3b454b" />
            <path d={wavePath(357, 39, 8, 3, (_x, r) => 6 + r * r * 7)} fill="#3b454b" />
          </g>
        </g>
      )}
      {index === 10 && (
        <g>
          <rect width="1804" height="52" fill="#111" />
          <rect y="2" width="1804" height="47" fill="#51425f" />
          <rect y="2" width="1804" height="3" fill="#423b4b" />
          <path
            d={wavePath(1804, 27, 12, 3, (x, r) => 1 + r * r * 4 + 5 * Math.pow(Math.abs(Math.sin(x / 190 + 1.4)), 8) * r)}
            fill="#2a184e"
            stroke="#2a184e"
          />
        </g>
      )}
    </svg>
  );
}

function UpperTimeline() {
  const bars = Array.from({ length: 22 }, (_, i) => i + 8);
  return (
    <div className="relative flex min-w-0 flex-1 flex-col overflow-hidden border-l-2 border-[#151515]">
      <div className="flex h-[43px] items-end pl-[757px] text-[18px]"><Flag /><span className="ml-2 leading-5">PC1</span></div>
      <div className="flex h-[45px] text-[20px] leading-[24px] text-[#757575]">
        {bars.map((b) => (
          <div key={b} className="flex w-[85px] shrink-0 flex-col border-l-2 border-[#181818] pl-[8px]">
            <span>{b}</span>
            <span>1</span>
          </div>
        ))}
      </div>
      <SectionBar
        height="h-[41px]"
        items={[
          { name: '', width: 85, length: '(32I0)', color: 'bg-[#231829]' },
          { name: 'Verse 1', width: 680, length: '(32I0)', color: 'bg-[#143243]' },
          { name: 'PC1', width: 680, color: 'bg-[#20164c]' },
          { name: 'Chorus 1', width: 500, color: 'bg-[#503857]' },
        ]}
      />
      <div className="bg-[repeating-linear-gradient(to_right,#191919_0_2px,transparent_2px_85px)]">
        <div className="h-[22px]" />
        <div className="h-[22px] w-[1360px] border-y-2 border-[#191919] bg-[#293728]" />
        <div className="bg-[repeating-linear-gradient(to_right,#1b1b1b_0_2px,#303030_2px_85px)]">
          {tracks.map((_, i) => <UpperLane key={i} index={i} />)}
          <div className="h-1" />
        </div>
      </div>
      {/* playhead over every lane */}
      <div className="absolute top-[55px] bottom-0 left-[423px] flex w-[28px] flex-col items-center">
        <Playhead />
        <div className="w-[3px] flex-1 bg-[#27471f]" />
      </div>
    </div>
  );
}

function TracksWindow() {
  return (
    <section className="flex h-[870px] shrink-0 flex-col border-2 border-[#181818] bg-[#272727] text-[#686868]">
      <WindowTabs active="Tracks" bar="bg-[#1f1f1f]" />
      <div className="flex min-h-0 flex-1">
        <div className="flex w-[1513px] shrink-0 flex-col border-r-2 border-[#181818]">
          <div className="flex h-[156px] shrink-0">
            <SearchBox label="Search the track list" className="mt-[14px] ml-[22px] w-[212px]" />
            <Pick label="Sequence" value="THINGS BEHIND" className="mt-[17px] ml-[27px] w-[212px]" />
            <Pick label="Section" value="Intro" className="mt-[17px] ml-[28px] w-[212px]" />
            <div className="mt-[92px] mr-[2px] ml-auto flex h-6 items-center gap-5 text-[#151515]">
              <Bars />
              <Link2 size={36} strokeWidth={2} className="text-[#183f4e]" />
            </div>
          </div>
          <TrackTable />
        </div>
        <div className="w-[18px] shrink-0 self-center pl-[5px]"><div className="h-2 w-2 rounded-full bg-[#151515]" /></div>
        <UpperTimeline />
        <div className="flex w-[27px] shrink-0 flex-col">
          <div className="flex h-[173px] shrink-0 flex-col items-center gap-[66px] pt-[16px]"><Flag /><Plus /></div>
          <VerticalBar thumb="h-[408px]" />
        </div>
      </div>
      <div className="flex h-[27px] shrink-0 items-center border-t-2 border-[#181818] pl-[6px] text-[#191919]">
        <svg width="20" height="18" className="mr-2 text-[#24505f]"><path d="M0 0h20v4H0zM0 6h6v12H0zM8 6h12v12H8z" fill="currentColor" /></svg>
        <Left className="mr-[14px]" />
        <div className="h-[12px] w-[710px] rounded-full bg-[#191919]" />
        <Play className="mr-[34px] ml-auto" />
        <div className="flex w-[1836px] items-center">
          <Left />
          <div className="ml-[140px] h-[12px] w-[502px] rounded-full bg-[#191919]" />
          <Play className="mr-4 ml-auto" />
          <span className="mr-3 h-[3px] w-[14px] bg-[#191919]" />
          <Plus className="mr-[30px]" />
        </div>
      </div>
    </section>
  );
}

/* ---------- lower window: sequence ---------- */

function Box({ checked, label }: { checked?: boolean; label: string }) {
  return (
    <input
      type="checkbox"
      aria-label={label}
      defaultChecked={checked}
      className="h-[20px] w-[19px] shrink-0 appearance-none rounded border-2 border-[#1a1a1a] bg-[length:9px_9px] bg-center bg-no-repeat checked:bg-[linear-gradient(#0d0d0d,#0d0d0d)]"
    />
  );
}

function Meter({ values, wide }: { values: number[]; wide?: boolean }) {
  return (
    <div className={cn('flex items-end self-stretch bg-[#08161c]', wide ? 'w-[24px]' : 'w-[15px]', values.length === 2 && 'gap-[3px]')}>
      {values.map((v, i) => (
        <div
          key={i}
          className={cn('flex-1', v > 55 ? 'bg-linear-to-t from-[#1b5f1c] to-[#5f6420]' : 'bg-[#1b5f1c]', v > 75 && 'via-[#626420] to-[#7a4a1c]')}
          style={{ height: `${v}%` }}
        />
      ))}
    </div>
  );
}

function Keys({ labels }: { labels: string[] }) {
  return (
    <svg viewBox="0 0 34 186" preserveAspectRatio="none" className="h-full w-[34px]">
      <rect width="34" height="186" fill="#6e6e6e" />
      {Array.from({ length: 14 }, (_, i) => <rect key={i} y={i * 14} width="34" height="1" fill="#222" />)}
      {[17, 47, 76, 120, 149].map((y) => <rect key={y} y={y} width="17" height="12" fill="#050505" />)}
      {labels.map((l, i) => (
        <text key={l} x="8" y={i === 0 ? 176 : i === 1 ? 44 : 56} fontSize="12" fontWeight="bold" fill="#111">{l}</text>
      ))}
    </svg>
  );
}

interface HeadProps {
  name: string;
  color: string;
  icon: ReactNode;
  height: string;
  rec?: boolean;
  freeze?: boolean;
  inline?: string;
  meter: number[];
  keys?: string[];
  note?: boolean;
  dark?: boolean;
  children?: ReactNode;
}

function TrackHead({ name, color, icon, height, rec, freeze, inline, meter, keys, note, dark, children }: HeadProps) {
  return (
    <div className={cn('flex border-b-2 border-[#1b1b1b] pl-[19px]', height)}>
      <div className="flex w-[460px] shrink-0 flex-col">
        <div className={cn('mt-[2px] flex h-[28px] shrink-0 items-center text-[18px]', color, dark ? 'text-[#8a8a8a]' : 'text-[#0d0d0d]')}>
          <span className="flex w-[26px] justify-center">{icon}</span>
          <span className={inline && 'w-[88px]'}>{name}</span>
          {inline && <Pick label={`${name} input`} value={inline} prefix={IN} className="w-[218px]" />}
          <Play className="mr-[9px] ml-auto h-[13px] w-[16px] text-[#1b5f1c]" />
          <span className="mr-[9px] w-[18px]">
            {rec && <span className="block h-[15px] w-[17px] rounded-full bg-[#1f0a0b]" />}
            {freeze && <Snowflake size={18} strokeWidth={3} className="text-[#777]" />}
          </span>
          <Bars className="mr-[12px] text-[#151515]" />
        </div>
        {children && (
          <div className="flex flex-1">
            <div className="flex w-[7px] bg-[#1f323f]" />
            <div className="flex w-[23px] items-end justify-center pb-2 text-[#151515]"><Play className="h-3 w-[7px]" /></div>
            <div className="flex w-[406px] flex-col gap-[6px] pt-1 text-[18px] text-[#5a5a5a]">{children}</div>
          </div>
        )}
      </div>
      <div className="flex w-[24px] shrink-0 flex-col items-start pt-1 pl-[2px]">
        {children && <Play className="mb-[14px] ml-[5px] h-[13px] w-[9px] text-[#111]" />}
        <div className="flex flex-1"><Meter values={meter} wide={meter.length > 2} /></div>
      </div>
      <div className="flex flex-1 flex-col items-end pt-1 pr-[10px] text-[#151515]">
        <div className="flex items-center gap-2">
          {note && <Eighth className="h-[18px] w-[15px]" />}
          <Search size={18} strokeWidth={3} />
        </div>
        {keys && <div className="flex items-center gap-2"><Up className="w-[15px]" /><Search size={18} strokeWidth={3} /></div>}
        {children && <div className="mt-2 mr-[2px] mb-3 flex w-2 flex-1 items-center justify-center bg-[#191919]"><span className={cn('w-1 bg-[#3c3c3c]', keys ? 'h-[18px]' : 'h-[30px]')} /></div>}
      </div>
      <div className="flex w-[34px] py-1">{keys && <Keys labels={keys} />}</div>
    </div>
  );
}

function Amount({ label, box = true }: { label: string; box?: boolean }) {
  return (
    <label className="flex items-center">
      <span className="w-[91px]">{label}</span>
      <Box label={label} />
      {box ? (
        <input aria-label={`${label} amount`} defaultValue="0" className="ml-2 h-5 w-[31px] bg-[#141414] text-center text-[18px] font-bold text-[#777]" />
      ) : (
        <Eighth className="ml-[10px] text-[#0b0b0b]" />
      )}
    </label>
  );
}

function Line({ children }: { children: ReactNode }) {
  return <div className="flex h-[27px] shrink-0 items-center">{children}</div>;
}

function Tags({ tags, className }: { tags: string[]; className?: string }) {
  return (
    <span className={cn('flex gap-1 text-[18px]', VERDANA, className)}>
      {tags.map((t) => <Tag key={t} text={t} dark="bg-[#1f1f1f] leading-6" />)}
    </span>
  );
}

function Heads() {
  return (
    <>
      <TrackHead name="Viola" color="bg-[#6a5053]" icon={<Note />} height="h-[201px]" rec meter={[52]} keys={['C3']} note>
        <Line><Pick label="Viola view" value="Clips" className="w-[234px]" /><Pick label="Viola mode" value="Insert" className="ml-[19px] w-[153px]" /></Line>
        <Line>
          <Pick label="Viola input" value="Korg Keystage-1" prefix={IN} className="w-[234px]" />
          <Pick label="Viola data" value="Lines" className="ml-[19px] w-[153px]" prefix={<svg width="30" height="14"><path d="M0 12h12l14-9" stroke="#444" fill="none" /><path d="M0 11h4v3H0zM12 11h4v3h-4zM24 1h4v3h-4z" fill="#1d5a6c" /></svg>} />
        </Line>
        <Line><Pick label="Viola output" value="Falcon-1" prefix={OUT} className="mr-[19px] w-[234px]" /><Amount label="Quantize" box={false} /></Line>
        <Line><Pick label="Viola take" value="take 1" className="mr-[19px] w-[234px]" /><Amount label="Transpose" /></Line>
        <Line><Pick label="Viola patch" value="--" className="mr-[14px] w-[194px]" /><Tags tags={['MIDI', 'strings', 'sus']} /></Line>
      </TrackHead>
      <TrackHead name="Violoncello" color="bg-[#5f4e58]" icon={<Note />} height="h-[190px]" rec meter={[48]} keys={['C1', 'C2', 'B1']} note>
        <Line><Pick label="Violoncello view" value="Note" className="w-[234px]" /><Pick label="Violoncello mode" value="Insert" className="ml-[19px] w-[153px]" /></Line>
        <Line>
          <Pick label="Violoncello input" value="Follow Main" prefix={IN} className="w-[234px]" />
          <Pick label="Violoncello data" value="Bars" className="ml-[19px] w-[153px]" prefix={<svg width="30" height="18"><path d="M4 4h8v3h8v6h9v5H0V10h4z" fill="#142832" /><path d="M6 1h4v3H6zM14 5h4v3h-4zM24 11h4v3h-4z" fill="#1d5a6c" /></svg>} />
        </Line>
        <Line><Pick label="Violoncello output" value="Falcon-2" prefix={OUT} className="w-[194px]" /><Pick label="Violoncello patch" value="--" className="ml-[18px] w-[194px]" /></Line>
        <Line><Pick label="Violoncello take" value="take 1" className="mr-[19px] w-[234px]" /><Amount label="Quantize" box={false} /></Line>
      </TrackHead>
      <TrackHead name="Viol...ello" color="bg-[#574a5a]" icon={<Note />} height="h-[34px]" rec inline="Follow Main" meter={[30]} note />
      <TrackHead name="Harp" color="bg-[#4a4353]" icon={<Note />} height="h-[35px]" rec inline="NI Kontrol S88 mk3-1" meter={[30]} note />
      <div className="h-[31px] border-b-2 border-[#1b1b1b] pt-[2px]">
        <div className="flex h-[27px] items-center gap-3 bg-[#1f1548] pl-2 text-[18px] text-[#757575]"><Down className="text-[#0d0a1c]" />Mixes</div>
      </div>
      <TrackHead name="THINGS BEHIND ST Mix" color="bg-[#143345]" icon={<StereoIcon />} height="h-[225px]" freeze dark meter={[80, 76]}>
        <Line>
          <Pick label="ST view" value="Clips" className="w-[234px]" />
          <Pick label="ST automation" value="Auto" className="ml-[19px] w-[70px] bg-[#1a1a1a] px-1 text-[#3c3c3c] italic" />
          <Pick label="ST mode" value="Insert" className="ml-[6px] w-[77px] px-1" />
        </Line>
        <Line><Pick label="ST input" value="--" prefix={IN} className="w-[406px]" /></Line>
        <Line><Pick label="ST output" value="Main Out L-R" prefix={OUT} className="mr-[19px] w-[234px]" /><Amount label="Transpose" /></Line>
        <Line><Pick label="ST take" value="take 1" className="mr-[19px] w-[234px]" /><Amount label="Detune" /></Line>
        <Line><Pick label="ST ARA" value="ARA --" className="mr-[14px] w-[194px] bg-[#1a1a1a] text-[#444]" /><Tags tags={['Audio', 'Mix']} /></Line>
      </TrackHead>
      <TrackHead
        name="THINGS BEHIND 7.1.4 MIX"
        color="bg-[#41394c]"
        icon={<b className="text-[10px]">7.1.4</b>}
        height="h-[436px]"
        meter={[64, 74, 60, 20, 56, 32, 22, 40, 50, 48, 34, 25]}
      >
        <Line>
          <Pick label="Surround view" value="Soundbites" className="w-[234px]" />
          <Pick label="Surround automation" value="Auto" className="ml-[19px] w-[70px] bg-[#0e3a10] px-1" />
          <Pick label="Surround mode" value="Insert" className="ml-[6px] w-[77px] px-1" />
        </Line>
        <Line><Pick label="Surround input" value="--" prefix={IN} className="w-[406px]" /></Line>
        <Line><Pick label="Surround output" value="Host Out 11-22" prefix={OUT} className="w-[406px]" /></Line>
        <Line><Pick label="Surround take" value="take 1" className="w-[406px]" /></Line>
        <Line><Pick label="Surround ARA" value="ARA --" className="w-[406px]" /></Line>
        <div className="flex flex-col gap-[6px] pt-1">
          <Line><Amount label="Transpose" /></Line>
          <Line><Amount label="Detune" /></Line>
        </div>
        <Tags tags={['Audio', 'Mix', 'Surround']} className="-ml-[4px]" />
      </TrackHead>
    </>
  );
}

const BAR = 72.3;
const at = (bar: number) => Math.round((bar - 6.497) * BAR);

const violaNotes = [[433, 34, 191, 2], [467, 36, 183, 10], [505, 34, 141, 13], [542, 33, 111, 13], [576, 35, 82, 13], [614, 33, 67, 13], [648, 35, 38, 13], [686, 178, 111, 13], [866, 270, 35, 2], [2630, 54, 52, 11], [2680, 18, 96, 11], [2700, 50, 156, 11]];
const celloNotes = [[396, 146, 128], [542, 72, 50], [614, 34, 95], [648, 38, 72], [686, 252, 128], [938, 37, 95], [975, 72, 128], [1047, 37, 50], [1084, 60, 95], [2610, 58, 107], [2700, 50, 58], [2660, 40, 179]];

function Clip({ x, end, name, color }: { x: number; end: number; name: string; color: string }) {
  return (
    <div
      className={cn('absolute top-[3px] bottom-[3px] overflow-hidden rounded-lg border-2 border-[#0a0a0a] px-[5px] text-[18px] leading-[26px] text-[#777]', color)}
      style={{ left: x, width: end - x }}
    >
      {name}
    </div>
  );
}

function LowerTimeline() {
  const labels = Array.from({ length: 19 }, (_, i) => i * 2 + 7);
  return (
    <div className="relative min-w-0 flex-1 overflow-hidden border-l-2 border-[#151515] text-[18px]">
      <svg viewBox="0 0 2750 1330" preserveAspectRatio="none" className="absolute inset-0 h-full w-full">
        {Array.from({ length: 39 }, (_, i) => (
          <path key={i} d={`M${at(i + 7)} ${i % 2 ? 30 : 16}V1330`} stroke={i % 2 ? '#222228' : '#161616'} strokeWidth={2} />
        ))}
        {Array.from({ length: 155 }, (_, i) => (
          <path key={`t${i}`} d={`M${Math.round(i * 18.08)} 37v9`} stroke="#181818" strokeWidth={2} />
        ))}
      </svg>
      <div className="relative h-[46px] text-[20px] leading-[46px] text-[#6c6c6c]">
        {labels.map((b) => (
          <span key={b} className="absolute -top-1" style={{ left: at(b) + 5 }}>{b}</span>
        ))}
      </div>
      <div className="relative h-[51px] border-y-2 border-[#1b1b1b] pt-1">
        <SectionBar
          height="h-[39px]"
          items={[
            { name: '', width: at(9), length: '(32I0)', color: 'bg-[#231829]' },
            { name: 'Verse 1', width: at(17) - at(9), length: '(32I0)', color: 'bg-[#143243]' },
            { name: 'PC1', width: at(25) - at(17), length: '(32I0)', color: 'bg-[#20164c]' },
            { name: 'Chorus 1', width: at(41) - at(25), length: '(64I0)', color: 'bg-[#503857]' },
            { name: 'Verse 2', width: 300, color: 'bg-[#143243]' },
          ]}
        />
      </div>
      <div className="relative h-[29px] border-b-2 border-[#1b1b1b] leading-[28px]">
        <span className="absolute flex items-center gap-1" style={{ left: at(17) - 6 }}><Flag />PC1</span>
        {[[2954, 'Ab Major'], [3243, 'F Major'], [3821, 'Ab Major']].map(([x, n]) => (
          <span key={x} className="absolute flex items-center gap-1 bg-[#191919] pr-1" style={{ left: Number(x) - 1258 }}>
            <span className="h-[18px] w-6 border border-black bg-[repeating-linear-gradient(to_right,#555_0_4px,#111_4px_6px)]" />{n}
          </span>
        ))}
      </div>
      <div className="relative h-[22px] border-b-2 border-[#1b1b1b]">
        <div className="absolute top-[2px] h-[16px] w-[720px] border-r-[14px] border-[#3d3d3d] bg-[#55292a]" style={{ left: at(27) }} />
      </div>
      <div className="relative h-[22px] border-b-2 border-[#1b1b1b]">
        <div className="h-full bg-[#293728]" style={{ width: at(25) }} />
      </div>

      <div className="relative h-[201px] border-b-2 border-dotted border-[#555]">
        <Clip x={at(9)} end={2780} name="Clip - Viola" color="bg-[#554446]" />
        <svg viewBox="0 0 2750 201" preserveAspectRatio="none" className="absolute inset-0 h-full w-full">
          {violaNotes.map(([x, w, y, h]) => <rect key={x} x={x} y={y} width={w} height={h} fill="#6e5f62" />)}
        </svg>
      </div>
      <div className="relative h-[190px] border-b-2 border-[#555]">
        <svg viewBox="0 0 2750 188" preserveAspectRatio="none" className="absolute inset-0 h-full w-full">
          {[4, 25, 50, 72, 94, 116, 138, 160].map((y) => <rect key={y} y={y} width="2750" height="11" fill="#1e1e1e" fillOpacity="0.7" />)}
          <path d="M0 102H193V181H0zM254 181V102H400L542 15H684V0L710 5 757 24 790 28 828 40H2750V181z" fill="#383e45" />
          {[50, 94, 138].map((y) => <rect key={y} y={y} x={y === 138 ? 254 : 640} width="2496" height="11" fill="#30353b" fillOpacity="0.8" />)}
          {celloNotes.map(([x, w, y]) => (
            <g key={x}>
              <rect x={x} y={y} width={w} height="10" fill="#453a40" stroke="#0d0b0c" strokeWidth="2" />
              <rect x={x + w * 0.6} y={y + 1} width={w * 0.4 - 1} height="8" fill="#655960" />
            </g>
          ))}
        </svg>
      </div>
      <div className="relative h-[34px] border-b-2 border-[#555]">
        <Clip x={-20} end={at(8)} name="" color="bg-[#4f424e]" />
        <Clip x={at(9)} end={at(16)} name="Clip - Violoncello" color="bg-[#4f424e]" />
        <Clip x={at(17)} end={2780} name="Clip - Violoncello" color="bg-[#4f424e]" />
      </div>
      <div className="relative h-[35px] border-b-2 border-[#555]">
        <Clip x={-20} end={at(9)} name="" color="bg-[#433d4c]" />
        <Clip x={at(9)} end={at(17)} name="Clip - Harp" color="bg-[#433d4c]" />
        <Clip x={at(18)} end={2780} name="Clip - Harp" color="bg-[#433d4c]" />
      </div>
      <div className="relative h-[31px] border-b-2 border-dotted border-[#555] bg-[#2c2c2c]" />
      <div className="relative h-[225px] border-b-4 border-[#3a3a3a] bg-[#192c37]">
        <svg viewBox="0 0 2750 220" preserveAspectRatio="none" className="h-full w-full">
          {[62, 166].map((mid, i) => (
            <path
              key={mid}
              d={wavePath(2750, mid, i + 21, 4, (x, r) => Math.min(51, 24 + r * 32 + 5 * Math.sin(x / 61) + 4 * Math.sin(x / 17)))}
              fill="#3b464d"
            />
          ))}
        </svg>
      </div>
      <div className="relative h-[436px] border-b-2 border-[#0b0b0b] bg-[#51425f]">
        <div className="h-[31px] border-b border-[#332c3b] bg-[#413a49]" />
        <svg viewBox="0 0 2750 402" preserveAspectRatio="none" className="h-[402px] w-full">
          {Array.from({ length: 12 }, (_, i) => (
            <path
              key={i}
              d={wavePath(2750, 15 + i * 33.4, i + 40, 4, (x, r) => {
                const burst = Math.pow(Math.abs(Math.sin((x - 35) / 88)), 24) * 10 + Math.pow(Math.abs(Math.sin(x / 133 + i)), 18) * 8;
                const soft = i === 4 || i === 5 || i === 7 ? 0.35 : 1;
                return 1 + r * r * r * 8 * soft + burst * r * soft;
              })}
              fill="#2a184e"
            />
          ))}
        </svg>
      </div>
      <div className="absolute top-[6px] bottom-0 flex w-[28px] flex-col items-center" style={{ left: at(12.97) }}>
        <Playhead />
        <div className="w-[3px] flex-1 bg-[#27471f]" />
      </div>
      <div className="absolute top-[126px] bottom-0 w-[2px] bg-[#57511b]" style={{ left: at(17) }} />
    </div>
  );
}

function SequenceToolbar() {
  const cell = 'flex items-center border-2 border-[#212121]';
  return (
    <div className="flex shrink-0 flex-col gap-[5px] pt-[10px] pl-[9px] text-[18px] text-[#6e6e6e]">
      <div className="flex h-[38px]">
        <div className={cn(cell, 'w-[1054px]')}>
          <span className="flex h-[34px] w-[34px] items-center justify-center bg-[#3b3758]">T</span>
          <Rack className="mr-1 ml-2 text-[#777]" />Falcon-1
          <Play className="ml-[15px] h-[14px] w-[17px] text-[#1b5f1c]" />
          <span className="ml-[10px] h-[16px] w-[16px] shrink-0 rounded-full bg-[#1f0a0b]" />
          <Pick label="Input" value="Follow Main" prefix={IN} className="ml-[11px] w-[157px]" />
          <Pick label="Output" value="Main Out L-R" prefix={OUT} className="ml-[11px] w-[157px]" />
          <Rack className="mx-[14px] h-[7px] w-[15px] text-[#5c5a70]" />
          <Pick label="Take" value="take 1" className="w-[157px]" />
          <Pick label="Automation" value="Latch" className="ml-[11px] w-[157px] bg-[#0e3a10]" />
          <span className="ml-3 flex items-center gap-[3px]"><Box label="Lock" /><Lock size={17} strokeWidth={3} /></span>
          <span className="ml-[10px] flex items-center gap-1"><Box label="Color" checked /><span className="h-[14px] w-[14px] rounded-full bg-[#1f4273]" /></span>
          <span className="ml-[10px] flex items-center gap-2"><Box label="Solo" /><b className="text-[#716a1f]">S</b></span>
        </div>
        <div className={cn(cell, 'ml-[15px] w-[466px]')}>
          <span className="flex h-full w-[34px] items-center justify-center border-r-2 border-[#212121]">M</span>
          <span className="mr-[6px] ml-[14px]">A</span>
          <span className="w-[92px] rounded bg-[#17361f] text-[16px] leading-[28px] text-[#5d7a63]">Falcon</span>
          <span className="mx-[11px] flex flex-col gap-1 text-[#151515]"><Up /><Down /></span>
          <span className="mx-[10px] flex h-[24px] w-[24px] justify-center rounded-full bg-[#7c7c7c] pt-[2px]"><span className="h-[7px] w-[5px] rounded-full bg-[#222]" /></span>
          <span className="ml-3 flex flex-col text-[11px] leading-3 text-[#555]">
            <input type="range" aria-label="Level" defaultValue={72} className="h-[14px] w-[100px] appearance-none bg-linear-to-r from-[#4a4a4a] to-[#4a4a4a] bg-[length:100%_6px] bg-center bg-no-repeat [&::-webkit-slider-thumb]:h-[14px] [&::-webkit-slider-thumb]:w-[20px] [&::-webkit-slider-thumb]:appearance-none [&::-webkit-slider-thumb]:bg-[#6b6b6b]" />
            <span className="flex justify-between"><span>48</span><span>12</span><span>3</span><span>0</span><span>3</span><span>6</span></span>
          </span>
        </div>
        <div className={cn(cell, 'mr-[30px] ml-auto w-[652px]')}>
          <span className="mr-[44px] ml-[17px] text-[#4a4a4a]">Q</span>
          <Pick label="Grid" value="Auto" className="w-[134px]" />
          <span className="mx-5 text-[#4a4a4a]">→</span>
          <span className="w-[66px]">4I000</span>
          <Box label="Snap" /><span className="mx-1 h-3 w-3 bg-[#26305f]" />
          <span className="mr-1 ml-3 h-3 w-3 bg-[#716a1f]" />
          <span className="mx-3 flex items-center gap-3"><Box label="Relative" checked />Rel</span>
          <Pick label="Relative to" value="" className="w-[60px]" />
          <span className="ml-auto pr-[32px]">1</span>
        </div>
      </div>
      <div className="flex h-[36px]">
        <div className={cn(cell, 'w-[305px]')}>
          <span className="flex h-full w-[35px] items-center justify-center border-r-2 border-[#212121] text-[#555]">C</span>
          <span className="ml-2">10I3I323</span>
          <span className="mr-2 ml-auto">B1 • 47</span>
        </div>
        <span className={cn(cell, 'ml-[16px] w-[36px] justify-center text-[#555]')}>E</span>
        <div className={cn(cell, 'ml-[1300px] w-[700px] whitespace-nowrap')}>
          <span className="w-[52px] pl-[10px]">S</span>
          <span className="w-[31px] text-[#484848]">↶</span>
          <span className="w-[82px]">1I1I000</span>
          <span className="w-[26px] text-[#484848]">←</span>
          <span className="w-[88px]">71I1I000</span>
          <span className="w-[26px] text-[#484848]">←</span>
          <span className="w-[84px]">28I0I000</span>
          <span className="mr-[20px] flex h-[27px] w-[22px] items-center justify-center bg-[#111]"><Down className="w-2 text-[#333]" /></span>
          <span className="w-[34px] text-[#484848]">↲</span>
          <span className="w-[84px]">4I009</span>
          <span className="w-[26px] text-[#484848]">↑</span>
          <span className="w-[80px]">4I009</span>
          <Art w={14} h={18} d="M0 0l14 9-6 1 4 7-3 1-4-7-5 3z" />
        </div>
      </div>
    </div>
  );
}

function SequenceWindow() {
  const rows: [string, string][] = [['Markers', 'h-[29px]'], ['Auto Record', 'h-[22px]'], ['Transport', 'h-[22px]']];
  return (
    <section className="flex min-h-0 flex-1 flex-col overflow-hidden rounded border-[3px] border-[#333] bg-[#282828] text-[#6a6a6a]">
      <WindowTabs active="Sequence" bar="bg-[#111]" />
      <SequenceToolbar />
      <div className="flex min-h-0 flex-1 overflow-hidden">
        <div className="w-[584px] shrink-0">
          <div className="h-[46px]" />
          <div className="flex h-[51px] items-center justify-end gap-[15px] border-y-2 border-[#1b1b1b] pr-[17px] text-[16px]">
            <Bars className="text-[#151515]" />
            <Link2 size={40} className="text-[#183f4e]" />
            Sections
          </div>
          {rows.map(([name, h]) => (
            <div key={name} className={cn('flex items-center justify-end border-b-2 border-[#1b1b1b] pr-[17px] text-[16px]', h)}>{name}</div>
          ))}
          <Heads />
        </div>
        <LowerTimeline />
        <div className="flex w-[27px] shrink-0 flex-col">
          <div className="flex h-[170px] shrink-0 flex-col items-center pt-[65px] text-[#555]"><Plus /><span className="h-[20px]" /><Flag /></div>
          <VerticalBar thumb="h-[891px] mt-[46px]" />
        </div>
      </div>
      <div className="flex h-[30px] shrink-0 items-center gap-2 border-t-2 border-[#1b1b1b] pl-[6px] text-[#191919]">
        <svg width="20" height="18" className="text-[#24505f]"><path d="M0 0h20v4H0zM0 6h6v12H0zM8 6h12v12H8z" fill="currentColor" /></svg>
        <Camera size={20} strokeWidth={3} />
        <Left className="ml-2" />
        <div className="ml-[114px] h-[12px] w-[1715px] rounded-full bg-[#191919]" />
        <Play className="ml-auto" />
        <span className="h-[3px] w-[14px] bg-[#191919]" />
        <Plus className="mr-[30px]" />
      </div>
    </section>
  );
}

/* ---------- right column ---------- */

const tutorial: [string, string[]][] = [
  ['Or', ['Le']],
  ['Au', ['Go', 'Pe']],
  ['Mi', ['Pl', 'Br']],
  ['Re', ['Ch', 'ou']],
  ['Ed', ['Go']],
];

function RightColumn() {
  return (
    <aside className="ml-[17px] flex w-[48px] shrink-0 flex-col overflow-hidden whitespace-nowrap text-[#686868]">
      <section className="h-[554px] shrink-0 border-2 border-[#181818] bg-[#272727]">
        <div className="flex h-[45px] items-center bg-[#282828] pl-[23px]"><Cross className="text-[#5c5c5c]" /></div>
        <div className="mt-[36px] ml-[18px] w-[30px] text-[#777]"><Art w={26} h={32} d="M0 0h5v32H0zM28 0v32L6 16z" /></div>
        <div className={cn('mt-[68px] pl-[10px] text-[14px] font-bold', VERDANA)}>PLAY</div>
        {['', 'on', 'off', 'off', '', 'power', 'power', '', '', ''].map((k, i) => (
          <div key={i} className="ml-[9px] flex h-[33px] items-center border-b-2 border-[#222] bg-[#2c2c2c] pl-[13px]">
            {k === 'on' && <Play className="text-[#1d5a22]" />}
            {k === 'off' && <Play className="text-[#444]" />}
            {k === 'power' && <Power size={16} strokeWidth={3} className="text-[#1b5467]" />}
          </div>
        ))}
      </section>
      <section className="mt-[19px] h-[812px] shrink-0 overflow-hidden border-2 border-[#181818] bg-[#272727]">
        <div className="flex h-[45px] items-center bg-[#282828] pl-[23px]"><Cross className="text-[#5c5c5c]" /></div>
        <svg width="56" height="56" className="mt-[42px] ml-[4px]"><circle cx="28" cy="28" r="25" fill="#23292d" stroke="#0a1a21" strokeWidth="6" /><path d="M28 9v11" stroke="#6e7d84" strokeWidth="2" /></svg>
        <div className="mt-[6px] ml-[5px] w-[60px] rounded bg-[#0a2029] pl-4 text-[18px] leading-[24px] font-bold text-[#24596c]">64</div>
        <div className="mt-[64px] text-[16px] text-[#484848]">-7-</div>
        <div className="ml-[28px] h-[24px] w-[3px] bg-[#181818]" />
        <div className="ml-[16px] h-[54px] w-[50px] rounded bg-[#606060]" />
        <div className="ml-[28px] h-[216px] w-[3px] bg-[#181818]" />
        <div className="mt-[32px] ml-[5px] w-[60px] rounded bg-[#0a2029] pl-4 text-[18px] leading-[24px] font-bold text-[#24596c]">98</div>
        <div className="mt-[32px] w-[60px] bg-[#111] text-[18px] leading-[27px]">I K...k3</div>
        <div className="mt-[6px] w-[60px] bg-[#111] text-[18px] leading-[27px]">alcon-4</div>
        <div className="mt-[8px] w-[60px] bg-[#4a4353] pl-3 text-[18px] leading-[28px] text-[#111]">Harp</div>
        <div className="mt-[22px] h-2 bg-[#1f3a48]" />
        <div className="mt-[8px] flex items-center gap-2 text-[18px]"><span className="text-[#24505f]"><Art w={18} h={20} d="M0 0h18v5H0zM0 7h5v13H0zM7 7h11v13H7z" /></span>Vi</div>
      </section>
      <section className="mt-[18px] flex min-h-0 flex-1 flex-col overflow-hidden border-2 border-[#181818] bg-[#272727] text-[20px]">
        <div className="flex h-[45px] shrink-0 items-center bg-[#282828] pl-[23px]"><Cross className="text-[#5c5c5c]" /></div>
        <div className="mt-4 bg-[#1f1f1f] pl-3 text-[26px] leading-[40px] font-bold">Tutorials</div>
        <div className="mt-[30px] mb-[4px] space-y-[20px] pl-3 leading-[26px]">
          <p>Welcome</p>
          <p>The</p>
          <div><p>To get</p><p className="italic">&gt; Tu</p><p>double</p></div>
        </div>
        {tutorial.map(([head, lines]) => (
          <div key={head} className="mt-[16px] bg-[#1e1e1e] py-[16px] pl-[22px] leading-[26px]">
            <p className="mb-[10px] text-[22px] font-bold">{head}</p>
            {lines.map((l) => <p key={l}>{l}</p>)}
          </div>
        ))}
      </section>
    </aside>
  );
}

/* ---------- stem separation dialog ---------- */

const neck = 'M24 22L44 4';

function StemIcon({ name }: { name: string }) {
  return (
    <svg width="50" height="42" viewBox="0 0 50 42" className="text-[#686868]" fill="currentColor" stroke="currentColor">
      {name === 'Drums' && <path d="M3 33L44 12M8 36Q24 14 42 8" strokeWidth="3" strokeLinecap="round" fill="none" />}
      {name === 'Bass' && (
        <>
          <path d={neck} strokeWidth="3" />
          <path d="M18 19q-10 5-13 15-1 5 5 4 12-3 16-12l6-3-3-3-5 1-2-5z" strokeWidth="0" />
          <path d="M40 6l5-4 1 3-4 4z" strokeWidth="1" />
        </>
      )}
      {name === 'Vocals' && (
        <>
          <circle cx="32" cy="12" r="8" strokeWidth="0" />
          <path d="M23 14l8 8L13 37q-3 2-5-1 0-2 1-4z" strokeWidth="0" />
          <path d="M24 10l10 11" stroke="#2b2b2b" strokeWidth="2" />
        </>
      )}
      {name === 'Guitar' && (
        <>
          <path d={neck} strokeWidth="3" />
          <path d="M41 5l4-3 2 2-3 4z" strokeWidth="2" />
          <path fillRule="evenodd" d="M17 20q5-7 11-2t0 11q-4 2-4 6-6 7-14 3-6-6-1-12 4-4 8-6zm5 1a3 3 0 1 0 1 0z" strokeWidth="0" />
          <path d="M12 29l6 5" stroke="#2b2b2b" strokeWidth="2" />
        </>
      )}
      {name === 'Ensemble Strings' && (
        <>
          <path d={neck} strokeWidth="3" />
          <path d="M38 4l7 6M42 1l4 4" strokeWidth="2" />
          <path d="M18 17q8-7 12-1 3 5-3 8l-1 4q0 8-9 11-8 2-12-3-2-8 6-13l5-2z" strokeWidth="0" />
        </>
      )}
      {name === 'Ensemble Brass' && (
        <g fill="none">
          <path d="M6 34L22 16M14 38L46 6M6 34q2 6 8 4M10 34L43 4" strokeWidth="2" />
          <path d="M20 14q-2-2 0-4l8 9-11 13" strokeWidth="3" />
          <path d="M13 6q5-5 11-2 1 6-4 8z" fill="currentColor" strokeWidth="1" />
        </g>
      )}
    </svg>
  );
}

function Option({ type, name, label, checked }: { type: 'radio' | 'checkbox'; name: string; label: string; checked?: boolean }) {
  return (
    <label className="flex h-[31px] items-center gap-[7px] pl-[9px]">
      <input
        type={type}
        name={name}
        defaultChecked={checked}
        className={clsx(
          'h-[19px] w-[19px] appearance-none border-2 border-[#131313] bg-center bg-no-repeat',
          type === 'radio'
            ? 'rounded-full bg-[length:10px_10px] checked:bg-[radial-gradient(#0e0e0e_0_5px,transparent_5px)]'
            : 'rounded-sm bg-[length:9px_9px] checked:bg-[linear-gradient(#0e0e0e,#0e0e0e)]'
        )}
      />
      {label}
    </label>
  );
}

function StemDialog() {
  return (
    <div role="dialog" aria-label="Stem Separation" className="absolute top-[41px] right-[185px] flex h-[685px] w-[895px] flex-col overflow-hidden rounded-2xl bg-[#2a2a2a] text-[17px] text-[#686868] shadow-[0_24px_70px_rgba(0,0,0,0.75)]">
      <h2 className="h-[49px] border-b-2 border-[#181818] bg-[#646464] text-center font-[Inter,sans-serif] text-[22px] leading-[46px] font-bold text-[#1f1f1f]">Stem Separation</h2>
      <div className="flex flex-1 justify-between pr-[27px] pl-[52px]">
        <div className="w-[350px] pt-[34px]">
          <p className="font-bold">Stems to extract:</p>
          <div className="mt-[15px] flex h-[464px] flex-col pl-[10px]">
            {['Drums', 'Bass', 'Vocals', 'Guitar', 'Ensemble Strings', 'Ensemble Brass'].map((s) => (
              <label key={s} className="flex flex-1 items-center">
                <span className="flex h-[56px] w-[73px] items-center justify-center rounded-lg border-2 border-[#3c3c3c]"><StemIcon name={s} /></span>
                <span className="ml-[38px] w-[188px]">{s}</span>
                <input type="checkbox" defaultChecked className="sr-only" />
                <svg width="32" height="32"><circle cx="16" cy="16" r="16" fill="#424242" /><path d="M8 16l6 6 11-12" stroke="#242424" strokeWidth="5" fill="none" /></svg>
              </label>
            ))}
          </div>
          <p className="mt-[25px] pl-[10px] text-[17px] italic">Memory Acceleration –&nbsp; Available</p>
        </div>
        <div className="w-[410px] pt-[44px]">
          <div className="h-[480px] rounded-md border-2 border-[#262626] bg-[#2d2d2d] pt-[29px] pl-[48px]">
            <p className="mb-[6px] font-bold">Output</p>
            <Option type="radio" name="output" label="New Tracks With Stems" />
            <Option type="radio" name="output" label="New Track With Stems Removed" />
            <Option type="radio" name="output" label="Both" checked />
            <p className="mt-[31px] mb-[6px] font-bold">Channel Format</p>
            <Option type="radio" name="format" label="Same As Source" checked />
            <Option type="radio" name="format" label="Mono" />
            <Option type="radio" name="format" label="Stereo" />
            <p className="mt-[31px] mb-[6px] font-bold">Other Options</p>
            <Option type="checkbox" name="mute" label="Mute Source Soundbites or Tracks" />
            <Option type="checkbox" name="precision" label="Extra Precision" checked />
          </div>
          <div className="mt-[32px] flex justify-between pr-[18px] pl-[23px] font-bold">
            <button className="h-[36px] w-[168px] rounded-sm bg-[#1f1f1f]">Cancel</button>
            <button className="h-[36px] w-[168px] rounded-sm bg-[#1f1f1f]">OK</button>
          </div>
        </div>
      </div>
    </div>
  );
}

/* ---------- dolby panner ---------- */

function Room() {
  const walls: string[] = [];
  for (let i = 1; i < 6; i++) {
    const outer = (484 * i) / 6;
    const inner = 121 + (243 * i) / 6;
    walls.push(`M0 ${outer}L204 ${inner}M816 ${outer}L612 ${inner}`);
    walls.push(`M${-204 + 204 * i} 484L${204 + 68 * i} 364M${204 + 68 * i} 121v20M${204 + 68 * i} 340v24`);
    walls.push(`M204 ${inner}h31M612 ${inner}h-35`);
  }
  [57, 103, 136, 171].forEach((x) => {
    const dy = (x / 204) * 121;
    walls.push(`M${x} ${dy}V${484 - dy}M${816 - x} ${dy}V${484 - dy}`);
  });
  [380, 402, 432].forEach((y) => {
    const dx = 204 - ((y - 364) / 120) * 204;
    walls.push(`M${dx} ${y}H${816 - dx}`);
  });
  return (
    <svg viewBox="0 0 816 484" className="block h-[484px] w-[816px] overflow-visible">
      <defs>
        <filter id="glow"><feGaussianBlur stdDeviation="12" /></filter>
        <radialGradient id="grey"><stop offset="0" stopColor="#4a4a4a" /><stop offset="1" stopColor="#2a2a2b" /></radialGradient>
        <radialGradient id="blue"><stop offset="0" stopColor="#263f58" /><stop offset="1" stopColor="#18233e" /></radialGradient>
        <clipPath id="room"><path d="M0 0L204 121H612L816 0V484H0z" /></clipPath>
      </defs>
      <g clipPath="url(#room)">
        <path d="M0 0L204 121H612L816 0V484H0z" fill="#151617" />
        <path d="M0 0L204 121H612L816 0V484L612 364H204L0 484zM204 121V364M612 121V364M0 484H816" fill="none" stroke="#303134" strokeWidth="18" filter="url(#glow)" />
        <path d={walls.join('')} fill="none" stroke="#2a2d33" strokeWidth="1" />
        <g fill="none" stroke="#2b2e34">
          <ellipse cx="408" cy="424" rx="288" ry="48" />
          <ellipse cx="408" cy="406" rx="186" ry="34" />
          <ellipse cx="408" cy="407" rx="91" ry="18" />
        </g>
      </g>
      <path d="M0 0L204 121H612L816 0V484H0z" fill="none" stroke="#303339" strokeWidth="2" />
      <path d="M204 121V364H612V121M204 364L0 484M612 364L816 484M0 242H235M577 242H816" fill="none" stroke="#2e333e" strokeWidth="2" />
      <rect x="235" y="141" width="342" height="199" fill="#1c1e20" stroke="#34373b" strokeWidth="2" />
      <g fill="#2d3138">
        <ellipse cx="157" cy="179" rx="12" ry="23" />
        <circle cx="536" cy="190" r="19" />
        <ellipse cx="657" cy="179" rx="23" ry="19" transform="rotate(-20 657 179)" />
        <ellipse cx="567" cy="391" rx="27" ry="17" />
      </g>
      <circle cx="247" cy="179" r="27" fill="url(#grey)" />
      <circle cx="567" cy="179" r="27" fill="url(#blue)" />
    </svg>
  );
}

function TopView() {
  const speaker = 'M-20 12L-13 -4H13L20 12zM-11 -6L-7 -18H7L11 -6z';
  return (
    <svg viewBox="0 0 441 441" className="block h-[441px] w-[441px] overflow-visible">
      <rect width="441" height="441" fill="#151617" />
      <rect x="12" y="12" width="417" height="417" fill="none" stroke="#2b2c2f" strokeWidth="18" filter="url(#glow)" />
      <g fill="none" stroke="#323439">
        {[73.5, 147, 294, 367.5].map((v) => <path key={v} d={`M${v} 0V441M0 ${v}H441`} />)}
        {[73.5, 147, 220.5].map((r) => <circle key={r} cx="220.500" cy="220.500" r={r} />)}
        <rect width="441" height="441" strokeWidth="2" />
      </g>
      <path d="M220.500 0V441M0 220.500H441" stroke="#30363f" strokeWidth="2" />
      <path d="M36 15H405" stroke="#292e3c" strokeWidth="5" />
      <g fill="#1b1b1c" stroke="#484849" strokeWidth="2">
        {['translate(0 4) rotate(-45)', 'translate(440 4) rotate(45)', 'translate(-4 220) rotate(-90)', 'translate(445 220) rotate(90)', 'translate(0 437) rotate(-135)', 'translate(440 437) rotate(135)'].map((t) => (
          <path key={t} d={speaker} transform={t} />
        ))}
        <path d={speaker} transform="translate(220 0)" fill="#323335" />
      </g>
      <circle cx="80" cy="160" r="25" fill="url(#grey)" />
      <circle cx="363" cy="160" r="25" fill="url(#blue)" />
    </svg>
  );
}

function Knob({ size, angle }: { size: number; angle: number }) {
  return (
    <svg width={size} height={size} viewBox="0 0 64 64">
      <circle cx="32" cy="32" r="30" fill="#101419" stroke="#3a3d42" strokeWidth="2" />
      <rect x="30" y="3" width="5" height="8" fill="#6a6a6a" transform={`rotate(${angle} 32 32)`} />
    </svg>
  );
}

function Segments({ items, active, tone }: { items: string[]; active: string; tone: string }) {
  return (
    <div className="flex h-[29px] w-[391px] rounded border-2 border-[#3c3d3f] bg-[#18191a] text-[17px]">
      {items.map((s, i) => (
        <button key={s} className={cn('flex-1 whitespace-nowrap', i > 0 && 'border-l-2 border-[#3c3d3f]', s === active && tone)}>{s}</button>
      ))}
    </div>
  );
}

const ZONES: [string[], number[], boolean?][] = [
  [['SCREEN', 'ONLY'], [0, 1, 2]],
  [['SURROUND', 'ONLY'], [3, 4, 5, 6]],
  [['CENTER', 'BACK'], [1, 5, 6], true],
  [['NO', 'BACK'], [0, 1, 2, 3, 4]],
  [['NO', 'SIDES'], [0, 1, 2, 5, 6]],
  [['ALL'], [0, 1, 2, 3, 4, 5, 6]],
];

function Zone({ lines, lit, on }: { lines: string[]; lit: number[]; on?: boolean }) {
  const spots = [[9, 8], [24, 8], [39, 8], [9, 25], [39, 25], [9, 42], [39, 42]];
  return (
    <button className="flex h-[124px] w-[121px] flex-col items-center text-[14px] leading-[13px]">
      <svg width="61" height="60" className="mb-[12px]">
        <rect x="1" y="1" width="59" height="58" rx="4" fill={on ? '#17263d' : '#1a1b1c'} stroke={on ? '#22334e' : '#3e3f41'} strokeWidth="2" />
        {spots.map(([x, y], i) => (
          <rect key={i} x={x} y={y} width="12" height="11" fill={lit.includes(i) ? (on ? '#5f646c' : '#2f3032') : 'none'} stroke={on ? '#5a5f68' : '#424345'} />
        ))}
      </svg>
      {lines.map((l) => <span key={l}>{l}</span>)}
    </button>
  );
}

function Group({ title, width, children }: { title: string; width: string; children: ReactNode }) {
  return (
    <fieldset className={cn('relative h-[291px] shrink-0 border-2 border-[#3e3f41]', width)}>
      <div className="absolute inset-x-0 -top-[21px] flex justify-center">
        <h3 className="border-2 border-[#3e3f41] bg-[#18191a] px-[8px] text-[20px] leading-[34px]">{title}</h3>
      </div>
      {children}
    </fieldset>
  );
}

function Panner() {
  const axes: [string, string, number, number][] = [['LEFT/RIGHT', 'X', 64, 90], ['FRONT/BACK', 'Y', 27, 32], ['ELEVATION', 'Z', 43, -18]];
  return (
    <div role="dialog" aria-label="Dolby 3D Panner" className="absolute top-[1351px] right-[198px] h-[1114px] w-[1550px] rounded-2xl bg-[#19191b] text-[#56585a] shadow-[0_24px_70px_rgba(0,0,0,0.75)]">
      <header className="flex h-[47px] items-center rounded-t-2xl border-b-2 border-[#101010] bg-[#5f5f5f] pl-[14px]">
        <button aria-label="Close panner" className="h-[20px] w-[20px] rounded-full bg-[#7d3b38]" />
        <button aria-label="Minimize panner" className="ml-[12px] h-[20px] w-[20px] rounded-full bg-[#80622e]" />
        <h2 className="flex-1 pr-[66px] text-center font-[Inter,sans-serif] text-[21px] font-bold text-[#222]">Dolby 3D Panner</h2>
      </header>
      <div className="flex h-[156px] items-start pt-[45px] pl-[55px]">
        <b className="w-[172px] font-['DejaVu_Serif'] text-[37px] leading-[54px] text-[#606060]">MOTU</b>
        <div className="flex h-[46px] w-[486px] items-center border-2 border-[#444] bg-black pr-3 pl-[16px] font-[Inter,sans-serif] text-[18px] font-medium text-[#747474]">
          <select aria-label="Object" className="flex-1 appearance-none bg-transparent outline-none"><option>Audio-1 - Object 15-16</option></select>
          <Down className="h-[14px] w-[22px] text-[#777]" />
        </div>
        <div className="ml-auto flex flex-col items-center">
          <b className={cn('text-[37px] leading-[44px] text-[#2c3f56]', VERDANA)}>3D PANNER</b>
          <div className="flex items-center text-[26px] leading-[40px]">
            <svg width="30" height="20" className="mr-1"><path d="M0 0h3a10 10 0 0 1 0 20H0zM30 0h-3a10 10 0 0 0 0 20h3z" fill="#626262" /></svg>
            <b className="mr-1 font-[Inter,sans-serif] font-semibold">Dolby</b><span className="font-[Inter,sans-serif] font-light">Atmos</span>
          </div>
        </div>
        <button aria-label="Panner settings" className="mr-[43px] ml-[50px]"><Settings size={66} strokeWidth={1} /></button>
      </div>
      <div className="flex pl-[46px]">
        <div className="w-[816px]">
          <Room />
          <div className="-mt-[14px] flex justify-center"><Segments items={['LEFT', 'BACK', 'RIGHT']} active="BACK" tone="bg-[#17243a]" /></div>
        </div>
        <div className="ml-[62px] flex w-[68px] flex-col items-center pt-[43px]">
          <div className="flex h-[439px] gap-[10px]">
            <span className="w-[17px] border-2 border-[#333] bg-black" />
            <span className="w-[17px] border-2 border-[#333] bg-black" />
          </div>
          <span className="mt-[11px] text-[17px]">INPUT</span>
        </div>
        <div className="relative ml-[59px] flex flex-col items-center pt-[43px]">
          <TopView />
          <span className="mt-[10px] text-[17px]">TOP VIEW</span>
          <Down className="absolute top-0 right-[4px] h-[14px] w-[20px]" />
          <Down className="absolute right-[8px] -bottom-[18px] h-[14px] w-[20px]" />
        </div>
      </div>
      <div className="mt-[38px] flex gap-[19px] pl-[46px]">
        <Group title="POSITION" width="w-[817px]">
          <div className="flex pt-[33px]">
            <div className="ml-[26px] flex w-[100px] flex-col gap-[39px] pt-[57px] text-[18px]">
              <button className="h-[30px] rounded border-2 border-[#3e3f41]">A R E</button>
              <button className="h-[30px] rounded border-2 border-[#22334e] bg-[#17243a]">X Y Z</button>
            </div>
            <div className="ml-[8px] grid grid-cols-[181px_181px_181px]">
              {axes.map(([label, key, value, angle]) => (
                <div key={label} className="flex flex-col items-center">
                  <span className={cn('px-1 text-[18px] leading-[28px]', key === 'Z' && 'rounded border-2 border-[#22334e] bg-[#17243a] leading-[24px]')}>{label}</span>
                  <div className="mt-[15px] h-[64px]"><Knob size={64} angle={angle} /></div>
                  <div className="mt-[17px] flex w-full items-center">
                    <span className="flex-1 border-t-2 border-dotted border-[#3a3b3d]" />
                    <button className={cn('h-[32px] w-[43px] rounded border-2 text-[18px]', key === 'X' ? 'border-[#4a2440] bg-[#29101f]' : 'border-[#3e3f41]')}>{key}</button>
                    <span className="flex-1 border-t-2 border-dotted border-[#3a3b3d]" />
                  </div>
                  <input aria-label={label} defaultValue={value} className="mt-[17px] h-[27px] w-[61px] border-2 border-[#3a3b3d] bg-black text-center text-[22px] text-[#6c7480]" />
                </div>
              ))}
            </div>
            <div className="ml-[10px] flex w-[90px] flex-col pt-[131px] text-center text-[18px] leading-[20px]"><span>STEREO</span><span>AXIS</span></div>
          </div>
          <div className="absolute inset-x-0 -bottom-[15px] flex justify-center">
            <Segments items={['LEFT ONLY', 'STEREO', 'RIGHT ONLY']} active="STEREO" tone="bg-[#29101f]" />
          </div>
        </Group>
        <Group title="SIZE" width="w-[157px]">
          <div className="flex flex-col items-center pt-[68px]">
            <Knob size={86} angle={34} />
            <input aria-label="Size" defaultValue="63" className="mt-[52px] h-[27px] w-[61px] border-2 border-[#3a3b3d] bg-black text-center text-[22px] text-[#6c7480]" />
          </div>
        </Group>
        <Group title="ZONES" width="w-[441px]">
          <div className="flex flex-wrap pt-[41px] pl-[36px]">
            {ZONES.map(([lines, lit, on]) => <Zone key={lines.join()} lines={lines} lit={lit} on={on} />)}
          </div>
        </Group>
      </div>
    </div>
  );
}

export default function App() {
  return (
    <div className="relative flex h-screen flex-col overflow-hidden bg-[#1f1f1f] font-['Liberation_Sans',Arial,sans-serif]">
      <TopBar />
      <main className="flex min-h-0 flex-1 border-t-2 border-[#161616] pt-[15px] pb-[17px] pl-[17px]">
        <LeftColumn />
        <div className="ml-[14px] flex min-w-0 flex-1 flex-col gap-[17px]">
          <TracksWindow />
          <SequenceWindow />
        </div>
        <RightColumn />
      </main>
      <StemDialog />
      <Panner />
    </div>
  );
}
